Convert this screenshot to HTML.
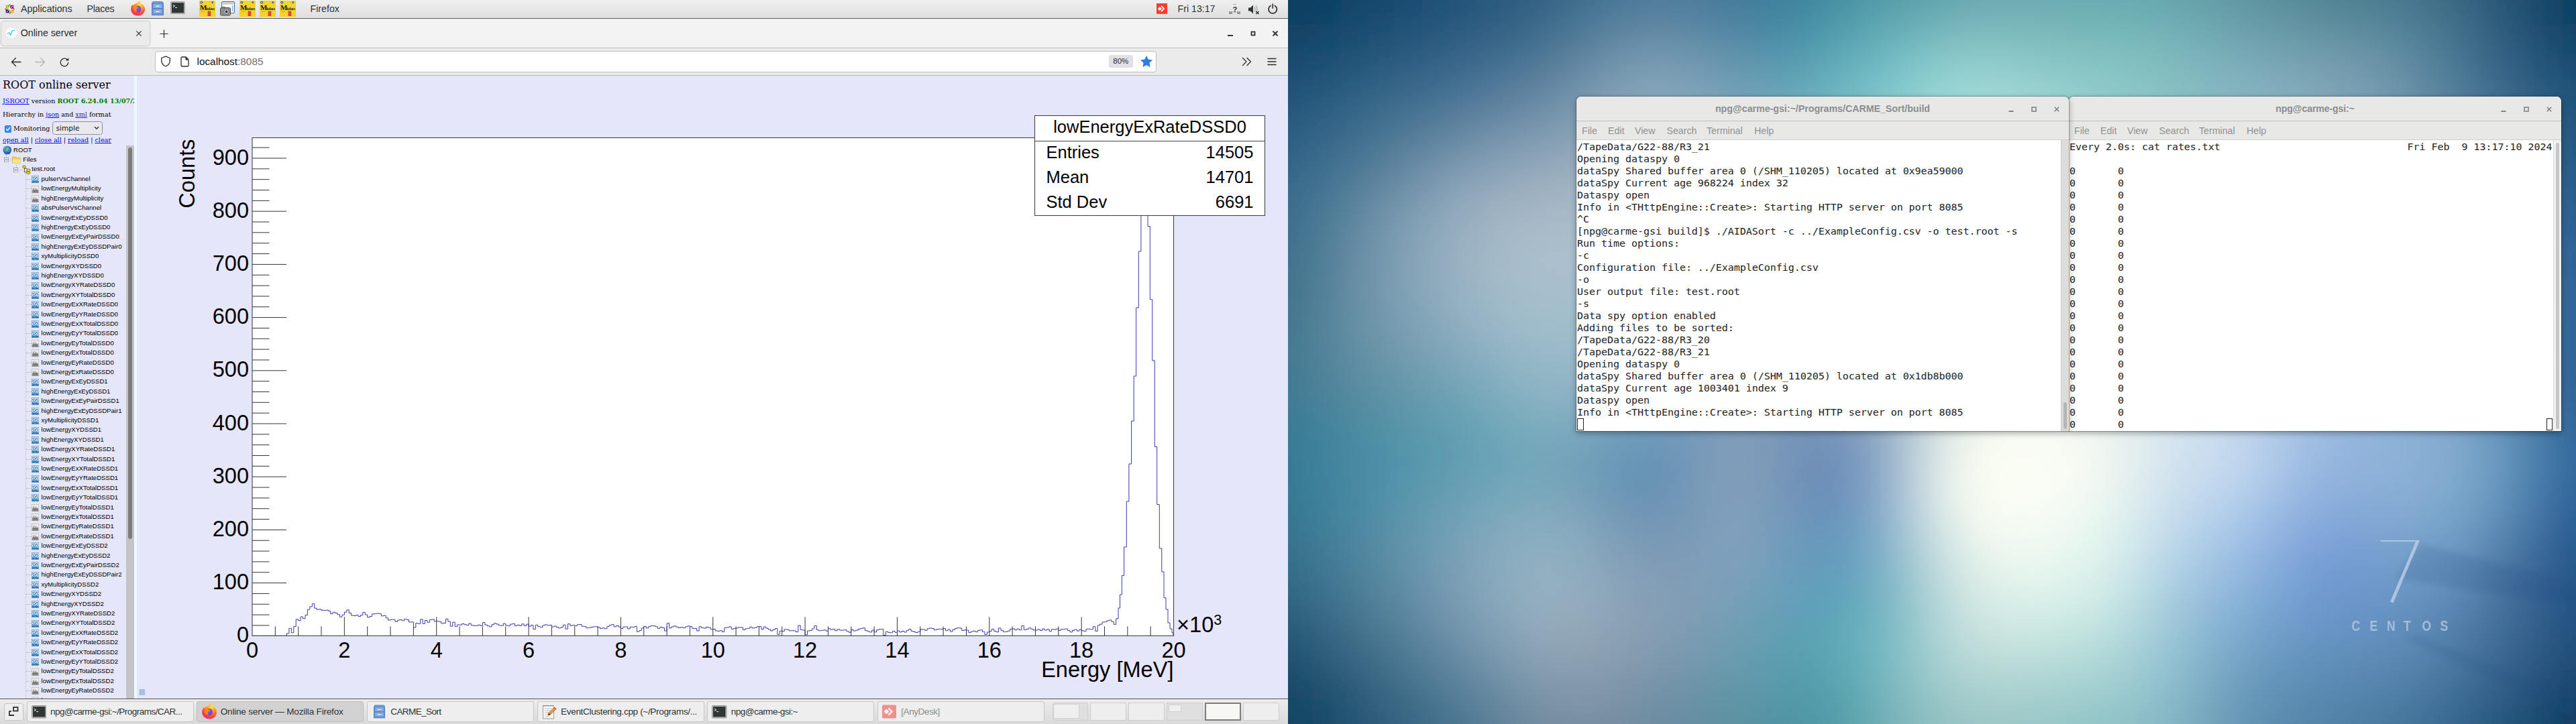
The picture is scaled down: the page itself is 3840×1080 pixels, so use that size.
<!DOCTYPE html><html><head><meta charset="utf-8"><title>screen</title><style>

*{box-sizing:border-box}
html,body{margin:0;padding:0}
body{width:3840px;height:1080px;position:relative;overflow:hidden;background:#0b3f5f;font-family:"Liberation Sans",sans-serif}
.abs{position:absolute}
#left{position:absolute;left:0;top:0;width:1920px;height:1080px;overflow:hidden;background:#e6e6fa}
#right{position:absolute;left:1920px;top:0;width:1920px;height:1080px;overflow:hidden}
/* top panel */
#tpanel{position:absolute;left:0;top:0;width:1920px;height:28px;background:linear-gradient(#efefef,#dfdfdf);border-bottom:1px solid #5a5a5a}
#tpanel .t{position:absolute;top:0;line-height:27px;font-size:14.2px;color:#2e3436;white-space:nowrap}
/* firefox chrome */
#tabbar{position:absolute;left:0;top:28px;width:1920px;height:44px;background:#f3f3f3;border-bottom:1px solid #bdbdbd}
#tab{position:absolute;left:1.3px;top:3.3px;width:222.5px;height:37.4px;background:#ebebeb;border:1px solid #cfcfcf;border-radius:5px;box-shadow:0 0 2px rgba(0,0,0,.15)}
#navbar{position:absolute;left:0;top:72px;width:1920px;height:41px;background:#ebebeb;border-bottom:1px solid #b9b9b9}
#urlbar{position:absolute;left:231px;top:3.8px;width:1493px;height:31.8px;background:#fff;border:1px solid #bebebe;border-radius:4px}
.ui{font-family:"Liberation Sans",sans-serif;color:#2e3436}
/* page */
#side{position:absolute;left:0;top:113px;width:200px;height:930px;background:#e6e6fa;overflow:hidden;font-family:"DejaVu Serif","Liberation Serif",serif;color:#000}
#split{position:absolute;left:200px;top:113px;width:4px;height:930px;background:#e8fbff}
#main{position:absolute;left:204px;top:113px;width:1716px;height:930px;background:#e6e6fa}
#side a{color:#0000ee;text-decoration:underline}
#side .ln{position:absolute;left:4px;white-space:nowrap}
.trow{position:absolute;left:0;height:14.4px;line-height:14.4px;font-family:"Liberation Sans",sans-serif;font-size:9.6px;color:#000;white-space:nowrap}
/* bottom panel */
#bpanel{position:absolute;left:0;top:1042px;width:1920px;height:38px;background:linear-gradient(#ececec,#dadada);border-top:1.5px solid #555}
.tb{position:absolute;top:3px;height:30.5px;border:1px solid #c6c6c6;border-radius:3px;background:#eeeeee;font-size:14.2px;color:#2e3436;white-space:nowrap;overflow:hidden}
.tb .lbl{position:absolute;left:34.5px;top:0;line-height:29px}
.tb.act{background:#d2d2d2;border-color:#bdbdbd}
.ws{position:absolute;top:5px;height:26.5px;border:1px solid #cdcdcd;background:#eeeeee}
/* terminals */
.win{position:absolute;top:144px;height:499px;border-radius:7px 7px 0 0;background:#fff;box-shadow:0 0 0 1px rgba(0,0,0,.25),0 3px 10px rgba(0,0,0,.35);overflow:hidden}
.win .title{position:absolute;left:0;top:0;right:0;height:37px;background:#e8e8e7;border-bottom:1px solid #c3c3c1;text-align:center;line-height:36px;font-weight:bold;font-size:14.2px;color:#8b8e8f}
.win .menu{position:absolute;left:0;top:37px;right:0;height:28px;background:#e8e8e7;border-bottom:1px solid #d0d0ce;font-size:14.2px;color:#8f9293}
.win .menu span{position:absolute;top:.7px;line-height:27px}
.term{position:absolute;top:66px;left:1px;font-family:"DejaVu Sans Mono","Liberation Mono",monospace;font-size:14.95px;line-height:18px;color:#222;white-space:pre;margin:0}

</style></head><body>
<div id="left">
<div id="tpanel">
<svg class="abs" style="left:7px;top:6px" width="15" height="15" viewBox="0 0 16 16">
<g transform="rotate(0 8 8)">
<rect x="1.800" y="1.800" width="5.600" height="5.600" fill="#9ccd2a"/><rect x="8.600" y="1.800" width="5.600" height="5.600" fill="#932279"/>
<rect x="1.800" y="8.600" width="5.600" height="5.600" fill="#262577"/><rect x="8.600" y="8.600" width="5.600" height="5.600" fill="#efa724"/>
<path d="M8 0l2.200 2.800H5.800zM8 16l2.200-2.800H5.800zM0 8l2.800-2.200v4.400zM16 8l-2.800-2.200v4.400z" fill="#932279"/>
<path d="M8 0l2.200 2.800H8zM0 8l2.800-2.200V8z" fill="#efa724"/>
<path d="M8 16l-2.200-2.800H8zM16 8l-2.800 2.200V8z" fill="#9ccd2a"/>
<path d="M3 3l10 10M13 3L3 13" stroke="#fff" stroke-width=".9"/><path d="M8 2v12M2 8h12" stroke="#fff" stroke-width=".7"/>
</g></svg>
<div class="t" style="left:31px">Applications</div>
<div class="t" style="left:129.500px;letter-spacing:-.28px">Places</div>
<svg class="abs" style="left:193.5px;top:1px" width="23" height="23" viewBox="0 0 24 24">
<defs><radialGradient id="ffg193" cx="65%" cy="20%" r="90%"><stop offset="0" stop-color="#ffe94a"/><stop offset=".35" stop-color="#ff9a1f"/><stop offset=".7" stop-color="#ff4a3d"/><stop offset="1" stop-color="#e8217a"/></radialGradient>
<radialGradient id="ffp193" cx="50%" cy="40%" r="60%"><stop offset="0" stop-color="#9a5cf0"/><stop offset="1" stop-color="#5b3fd0"/></radialGradient></defs>
<path d="M12 2.6c1.2-1.4 2.7-2 3.2-2.1 0 1.8 1 3 2.6 4.2C21 7 23 9.6 23 13.2 23 19 18.3 23.4 12.2 23.4 6 23.4 1.2 19 1.2 13.2c0-3 1.2-5.600 3-7.400 0 .8.200 1.500.600 2 .8-1.600 2.400-2.900 4.200-3.400C10 4 11 3.600 12 2.600z" fill="url(#ffg193)"/>
<circle cx="11.6" cy="13" r="5.3" fill="url(#ffp193)"/>
<path d="M5.500 9.500c2-2.600 5.500-2.600 7.500-1.200-1.600 0-2.600.800-2.800 1.800 2 .2 3 .6 3.200 1.600-1.600-.4-3 .4-3.600 1.600-.8 1.600.2 3.400 2.200 3.800-3 .8-6-.8-6.900-3.600-.4-1.400-.2-2.800.4-4z" fill="#ff8a16"/>
</svg>
<svg class="abs" style="left:226px;top:2px" width="18" height="21" viewBox="0 0 18 21">
<path d="M2 0.500h14l1.500 2v18h-17v-18z" fill="#6f9fe0" stroke="#3f6fb8" stroke-width=".8"/>
<rect x="2" y="3.500" width="14" height="7" fill="#88b2ec" stroke="#3f6fb8" stroke-width=".6"/>
<rect x="2" y="11.500" width="14" height="7" fill="#88b2ec" stroke="#3f6fb8" stroke-width=".6"/>
<rect x="6" y="6" width="6" height="2.400" rx=".6" fill="#f4f4f4" stroke="#777" stroke-width=".5"/>
<rect x="6" y="14" width="6" height="2.400" rx=".6" fill="#f4f4f4" stroke="#777" stroke-width=".5"/>
</svg>
<svg class="abs" style="left:254px;top:2.2px" width="22" height="19.3" viewBox="0 0 22 19">
<rect x=".5" y=".5" width="21" height="18" rx="1.2" fill="#b9bbb8" stroke="#9a9c99"/>
<rect x="2" y="2" width="18" height="15" fill="#2f3534"/>
<path d="M4 5l2.300 1.700L4 8.400" stroke="#e8e8e8" stroke-width="1.100" fill="none"/><path d="M7 9.300h3" stroke="#e8e8e8" stroke-width="1.100"/>
</svg>
<svg class="abs" style="left:297px;top:1px" width="24" height="24" viewBox="0 0 24 24">
<rect width="24" height="24" fill="#f6d32a"/>
<circle cx="3.300" cy="2.600" r="1.900" fill="#2a4a9a"/><circle cx="3.300" cy="2.600" r=".9" fill="#e8e8f0"/>
<circle cx="19.800" cy="2.600" r="1.500" fill="#4a62a8"/>
<text x="1" y="13.500" font-family="Liberation Serif,serif" font-weight="bold" font-size="11" fill="#111">M</text>
<text x="10.500" y="13.500" font-family="Liberation Serif,serif" font-weight="bold" font-size="6.500" fill="#111" textLength="12.500" lengthAdjust="spacingAndGlyphs">idas</text>
<rect x="12.500" y="15.500" width="4.800" height="7.500" fill="#e0452a"/><rect x="14.200" y="16.500" width="1.200" height="5" fill="#7a6ab0"/>
<rect x="2.500" y="16.200" width="6" height=".8" fill="#b89a20"/>
</svg>
<svg class="abs" style="left:328px;top:2px" width="23" height="22" viewBox="0 0 23 22">
<rect x="2.500" y=".500" width="19" height="17" rx="1.500" fill="#fdfdfd" stroke="#3a67b0"/>
<rect x="3.500" y="1.500" width="17" height="3" fill="#c9c9c9"/>
<rect x="17.800" y="6" width="1.800" height="9" fill="#9ab8e8"/>
<rect x=".5" y="9.500" width="15" height="11.500" rx="1.800" fill="#8d8f8c" stroke="#4c4e4b"/>
<rect x="3" y="8" width="5" height="2.500" rx=".8" fill="#6c6e6b"/>
<circle cx="9.500" cy="15.500" r="3.800" fill="#d8d8e0" stroke="#55575a" stroke-width=".8"/><circle cx="9.500" cy="15.500" r="2" fill="#20305a"/>
<rect x="12.800" y="18.300" width="1.800" height="1.500" fill="#f0b030"/>
</svg>
<svg class="abs" style="left:357px;top:1px" width="24" height="24" viewBox="0 0 24 24">
<rect width="24" height="24" fill="#f6d32a"/>
<circle cx="3.300" cy="2.600" r="1.900" fill="#2a4a9a"/><circle cx="3.300" cy="2.600" r=".9" fill="#e8e8f0"/>
<circle cx="19.800" cy="2.600" r="1.500" fill="#4a62a8"/>
<text x="1" y="13.500" font-family="Liberation Serif,serif" font-weight="bold" font-size="11" fill="#111">M</text>
<text x="10.500" y="13.500" font-family="Liberation Serif,serif" font-weight="bold" font-size="6.500" fill="#111" textLength="12.500" lengthAdjust="spacingAndGlyphs">idas</text>
<rect x="12.500" y="15.500" width="4.800" height="7.500" fill="#e0452a"/><rect x="14.200" y="16.500" width="1.200" height="5" fill="#7a6ab0"/>
<rect x="2.500" y="16.200" width="6" height=".8" fill="#b89a20"/>
</svg>
<svg class="abs" style="left:387px;top:1px" width="24" height="24" viewBox="0 0 24 24">
<rect width="24" height="24" fill="#f6d32a"/>
<circle cx="3.300" cy="2.600" r="1.900" fill="#2a4a9a"/><circle cx="3.300" cy="2.600" r=".9" fill="#e8e8f0"/>
<circle cx="19.800" cy="2.600" r="1.500" fill="#4a62a8"/>
<text x="1" y="13.500" font-family="Liberation Serif,serif" font-weight="bold" font-size="11" fill="#111">M</text>
<text x="10.500" y="13.500" font-family="Liberation Serif,serif" font-weight="bold" font-size="6.500" fill="#111" textLength="12.500" lengthAdjust="spacingAndGlyphs">idas</text>
<rect x="12.500" y="15.500" width="4.800" height="7.500" fill="#e0452a"/><rect x="14.200" y="16.500" width="1.200" height="5" fill="#7a6ab0"/>
<rect x="2.500" y="16.200" width="6" height=".8" fill="#b89a20"/>
</svg>
<svg class="abs" style="left:417px;top:1px" width="24" height="24" viewBox="0 0 24 24">
<rect width="24" height="24" fill="#f6d32a"/>
<circle cx="3.300" cy="2.600" r="1.900" fill="#2a4a9a"/><circle cx="3.300" cy="2.600" r=".9" fill="#e8e8f0"/>
<circle cx="19.800" cy="2.600" r="1.500" fill="#4a62a8"/>
<text x="1" y="13.500" font-family="Liberation Serif,serif" font-weight="bold" font-size="11" fill="#111">M</text>
<text x="10.500" y="13.500" font-family="Liberation Serif,serif" font-weight="bold" font-size="6.500" fill="#111" textLength="12.500" lengthAdjust="spacingAndGlyphs">idas</text>
<rect x="12.500" y="15.500" width="4.800" height="7.500" fill="#e0452a"/><rect x="14.200" y="16.500" width="1.200" height="5" fill="#7a6ab0"/>
<rect x="2.500" y="16.200" width="6" height=".8" fill="#b89a20"/>
</svg>
<div class="t" style="left:462.500px">Firefox</div>
<svg class="abs" style="left:1724px;top:5px" width="16" height="15.800" viewBox="0 0 17 16" preserveAspectRatio="none"><rect width="17" height="16" fill="#fb3b30"/><path d="M8.200 3.200L13 8l-4.800 4.800L6.900 11.500 10.400 8 6.900 4.500z" fill="#fff"/><path d="M5.200 4.800L8.400 8l-3.200 3.200L2 8z" fill="#fff"/></svg>
<div class="t" style="left:1755.500px">Fri 13:17</div>
<svg class="abs" style="left:1832px;top:6px" width="17" height="16" viewBox="0 0 17 16"><rect x="0" y="11" width="5" height="4" fill="#999"/><rect x="12" y="11" width="5" height="4" fill="#999"/><rect x="6" y="11.500" width="5" height="1" fill="#aaa"/><rect x="6" y="0" width="5" height="1" fill="#aaa"/><text x="5.500" y="12" font-family="Liberation Sans,sans-serif" font-weight="bold" font-size="11" fill="#2e3436">?</text></svg>
<svg class="abs" style="left:1860px;top:6px" width="18" height="16" viewBox="0 0 18 16"><path d="M1 5.500h3l4-4v13l-4-4H1z" fill="#2e3436"/><path d="M10 4.500c1.500 1.500 1.500 5.500 0 7M12 2.500c2.600 2.800 2.600 8.200 0 11" stroke="#a5a7a8" stroke-width="1.300" fill="none"/><path d="M12.500 11l4 4M16.500 11l-4 4" stroke="#2e3436" stroke-width="1.500"/></svg>
<svg class="abs" style="left:1889px;top:4.800px" width="16.500" height="16.500" viewBox="0 0 16 16"><path d="M5 3.300a6 6 0 1 0 6 0" stroke="#2e3436" stroke-width="1.700" fill="none" stroke-linecap="round"/><path d="M8 1v6" stroke="#2e3436" stroke-width="1.600" stroke-linecap="round"/></svg>
</div>
<div id="tabbar"><div id="tab">
<svg class="abs" style="left:7px;top:9px" width="16" height="16" viewBox="0 0 16 16"><circle cx="8" cy="8" r="8" fill="#fff"/><path d="M2 9.500l3-2 1.800 4L9.500 4.500H13" stroke="#35c3e6" stroke-width="1.100" fill="none"/></svg>
<div class="abs ui" style="left:28.500px;top:0;line-height:35px;font-size:14.200px;color:#2a2a2e">Online server</div>
<svg class="abs" style="left:200px;top:13px" width="10" height="10" viewBox="0 0 10 10"><path d="M1.400 1.400l7.200 7.200M8.600 1.400L1.400 8.600" stroke="#2a2a2e" stroke-width="1.100"/></svg>
</div>
<svg class="abs" style="left:238px;top:16px" width="13" height="13" viewBox="0 0 13 13"><path d="M6.500 0.500v12M.5 6.500h12" stroke="#2a2a2e" stroke-width="1.200"/></svg>
<svg class="abs" style="left:1829px;top:17px" width="10" height="10" viewBox="0 0 10 10"><path d="M1 8h8" stroke="#2e3436" stroke-width="2"/></svg>
<svg class="abs" style="left:1863px;top:17px" width="10" height="10" viewBox="0 0 10 10"><rect x="2.500" y="2.500" width="5" height="5" stroke="#2e3436" stroke-width="1.800" fill="none"/></svg>
<svg class="abs" style="left:1896px;top:17px" width="10" height="10" viewBox="0 0 10 10"><path d="M1.500 1.500l7 7M8.500 1.500l-7 7" stroke="#2e3436" stroke-width="1.800"/></svg>
</div>
<div id="navbar">
<svg class="abs" style="left:16px;top:13px" width="16" height="15" viewBox="0 0 16 15"><path d="M7.500 1.500L1.500 7.500l6 6M1.500 7.500H15" stroke="#2a2a2e" stroke-width="1.300" fill="none" stroke-linecap="round" stroke-linejoin="round"/></svg>
<svg class="abs" style="left:52px;top:13px" width="16" height="15" viewBox="0 0 16 15"><path d="M8.500 1.500l6 6-6 6M14.500 7.500H1" stroke="#b5b5b8" stroke-width="1.300" fill="none" stroke-linecap="round" stroke-linejoin="round"/></svg>
<svg class="abs" style="left:88px;top:12.500px" width="16" height="16" viewBox="0 0 16 16"><path d="M13.800 8.300a5.800 5.800 0 1 1-2-4.700" stroke="#2a2a2e" stroke-width="1.300" fill="none" stroke-linecap="round"/><path d="M14.300 1.200v4.300H10z" fill="#2a2a2e"/></svg>
<div id="urlbar">
<svg class="abs" style="left:7px;top:6px" width="16" height="17" viewBox="0 0 16 17"><path d="M8 1.200l6.300 2.300v4c0 4-2.600 6.800-6.300 8.500C4.300 14.300 1.700 11.500 1.700 7.500v-4z" stroke="#2a2a2e" stroke-width="1.300" fill="none" stroke-linejoin="round"/></svg>
<svg class="abs" style="left:37px;top:7px" width="13" height="16" viewBox="0 0 13 16"><path d="M2.500 1h5.500l4 4v8.500a1.500 1.500 0 0 1-1.500 1.500h-8A1.500 1.500 0 0 1 1 13.500v-11A1.500 1.500 0 0 1 2.500 1z" stroke="#2a2a2e" stroke-width="1.300" fill="none"/><path d="M7.500 1v4.500H12z" fill="#2a2a2e"/></svg>
<div class="abs ui" style="left:61.500px;top:0;line-height:29px;font-size:15.350px;color:#15141a;white-space:nowrap">localhost<span style="color:#6f6f78">:8085</span></div>
<div class="abs ui" style="left:1420.500px;top:5.500px;width:36.500px;height:19px;border-radius:3px;background:#e0e0e6;text-align:center;line-height:19px;font-size:11.500px;color:#2a2a2e">80%</div>
<svg class="abs" style="left:1468px;top:6px" width="18" height="17" viewBox="0 0 18 17"><path d="M9 .8l2.500 5.300 5.800.7-4.300 4 1.100 5.700L9 13.700l-5.100 2.800L5 10.800.7 6.800l5.800-.7z" fill="#2f7de1" stroke="#2f7de1" stroke-width=".8" stroke-linejoin="round"/></svg>
</div>
<svg class="abs" style="left:1851px;top:13px" width="15" height="14" viewBox="0 0 15 14"><path d="M1.500 1.500L7 7l-5.500 5.500M8 1.500L13.500 7 8 12.500" stroke="#2a2a2e" stroke-width="1.300" fill="none" stroke-linecap="round" stroke-linejoin="round"/></svg>
<svg class="abs" style="left:1888.500px;top:14px" width="14" height="12" viewBox="0 0 14 12"><path d="M.5 1.500h13M.5 6h13M.5 10.500h13" stroke="#2a2a2e" stroke-width="1.300"/></svg>
</div>
<div id="side">
<div class="ln" style="top:3.800px;font-size:16px;line-height:20px">ROOT online server</div>
<div class="ln" style="top:30.500px;font-size:9.600px;line-height:14px"><a>JSROOT</a> version <b style="color:#008000">ROOT 6.24.04 13/07/2021</b></div>
<div class="ln" style="top:51px;font-size:9.600px;line-height:14px">Hierarchy in <a>json</a> and <a style="color:#551a8b">xml</a> format</div>
<div class="abs" style="left:6.800px;top:74.300px;width:10.400px;height:10.400px;border-radius:2px;background:#3a8fe8;border:.5px solid #2a78d0"></div>
<svg class="abs" style="left:6.800px;top:74.300px" width="10.400" height="10.400" viewBox="0 0 10 10"><path d="M2.200 5.200l2 2 3.600-4.400" stroke="#fff" stroke-width="1.400" fill="none"/></svg>
<div class="ln" style="left:20px;top:72px;font-size:9.600px;line-height:14px">Monitoring</div>
<div class="abs" style="left:78px;top:67.500px;width:75px;height:20.300px;border:1px solid #8f8f9d;border-radius:3.500px;background:#e9e9ed"></div>
<div class="abs" style="left:83.500px;top:69px;font-family:'DejaVu Sans','Liberation Sans',sans-serif;font-size:10.600px;line-height:18px;color:#111">simple</div>
<svg class="abs" style="left:140px;top:75px" width="8" height="6" viewBox="0 0 8 6"><path d="M1 1.200l3 3 3-3" stroke="#222" stroke-width="1.300" fill="none"/></svg>
<div class="ln" style="top:89.200px;font-size:9.600px;line-height:14px"><a>open all</a> | <a>close all</a> | <a>reload</a> | <a>clear</a></div>
<div class="abs" style="left:9px;top:118.2px;width:0;height:4px;border-left:1px dotted #b4b4bc"></div>
<div class="abs" style="left:23.500px;top:132.6px;width:0;height:4px;border-left:1px dotted #b4b4bc"></div>
<div class="abs" style="left:38px;top:145.0px;width:0;height:900px;border-left:1px dotted #b4b4bc"></div>
<div class="trow" style="top:103.8px"><svg class="abs" style="left:4px;top:.5px" width="13.500" height="13.500" viewBox="0 0 16 16"><defs><radialGradient id="gl" cx="40%" cy="35%" r="70%"><stop offset="0" stop-color="#9fd0ff"/><stop offset=".6" stop-color="#2f6fd0"/><stop offset="1" stop-color="#123a8a"/></radialGradient></defs><circle cx="8" cy="8" r="7.500" fill="url(#gl)"/><path d="M3 6c1-2 3-3 5-3 1 1 0 2-1 3s-1 3-2 3-2-1-2-3zM10 7c1-1 3-1 4 0 0 2-1 4-3 5-1-1-1-3-1-5z" fill="#3fa64a"/><ellipse cx="8" cy="15" rx="5" ry="1" fill="#2a5fb0" opacity=".5"/></svg><span class="abs" style="left:20px">ROOT</span></div>
<div class="trow" style="top:118.2px"><svg class="abs" style="left:5.5px;top:4px" width="7.200" height="7.200" viewBox="0 0 9 9"><rect x=".5" y=".5" width="8" height="8" fill="#f4f4f8" stroke="#8a8a8a"/><path d="M2 4.500h5" stroke="#333" stroke-width="1"/></svg><div class="abs" style="left:13px;top:7px;width:5px;border-top:1px dotted #b4b4bc"></div><svg class="abs" style="left:18px;top:1.500px" width="13.500" height="11.500" viewBox="0 0 16 13"><path d="M.5 2.500c0-1 .5-1.500 1.500-1.500h3.500l1.500 1.500h6c1 0 1.500.5 1.500 1.500v7c0 1-.5 1.500-1.500 1.500H2c-1 0-1.500-.5-1.500-1.500z" fill="#f6d25a" stroke="#c89a1c" stroke-width=".8"/><path d="M1 5.500h14v5.500c0 .8-.4 1.200-1.200 1.200H2.200C1.400 12.200 1 11.800 1 11z" fill="#fbe48a"/></svg><span class="abs" style="left:34.300px">Files</span></div>
<div class="trow" style="top:132.6px"><svg class="abs" style="left:20.3px;top:4px" width="7.200" height="7.200" viewBox="0 0 9 9"><rect x=".5" y=".5" width="8" height="8" fill="#f4f4f8" stroke="#8a8a8a"/><path d="M2 4.500h5" stroke="#333" stroke-width="1"/></svg><div class="abs" style="left:28px;top:7px;width:5px;border-top:1px dotted #b4b4bc"></div><svg class="abs" style="left:33px;top:0px" width="13.500" height="14" viewBox="0 0 16 16"><path d="M4 3v10M4 6h5M4 12h6" stroke="#444" stroke-width="1"/><rect x="1" y="1" width="5" height="4" rx="1" fill="#f0d020" stroke="#6a5a00" stroke-width=".8"/><rect x="8" y="7" width="6" height="4" rx="1" fill="#f0d020" stroke="#6a5a00" stroke-width=".8"/><rect x="8" y="11.500" width="6" height="4" rx="1" fill="#f0d020" stroke="#6a5a00" stroke-width=".8"/></svg><span class="abs" style="left:47.300px;top:-1px">test.root</span></div>
<div class="trow" style="top:147.0px"><div class="abs" style="left:39px;top:7px;width:8px;border-top:1px dotted #b4b4bc"></div><svg class="abs" style="left:47.300px;top:2.200px" width="11.200" height="11.200" viewBox="0 0 16 16"><rect width="16" height="16" fill="#dfe9f5"/><rect x=".5" y=".5" width="15" height="15" fill="none" stroke="#6f93c0"/><path d="M2 3h3v2H2zM6 2h2v2H6zM10 3h3v2h-3zM3 6h2v2H3zM7 5h3v2H7zM12 6h2v2h-2zM2 9h2v2H2zM5 8h3v2H5zM9 9h2v2H9zM12 9h2v1h-2z" fill="#2d7fc1"/><rect x="1" y="11" width="14" height="4" fill="#1e6fb0"/><path d="M2 12h2v1H2zM6 13h3v1H6zM11 12h2v1h-2z" fill="#7fb6e6"/></svg><span class="abs" style="left:61.500px">pulserVsChannel</span></div>
<div class="trow" style="top:161.4px"><div class="abs" style="left:39px;top:7px;width:8px;border-top:1px dotted #b4b4bc"></div><svg class="abs" style="left:47.300px;top:2.200px" width="11.200" height="11.200" viewBox="0 0 16 16"><rect width="16" height="16" fill="#ececec"/><rect x=".5" y=".5" width="15" height="15" fill="none" stroke="#b5b5b5"/><path d="M2 15V9h1V6h1v4h1V4h1v5h1V7h1v3h1V5h1v4h1V7h1v3h1V8h1v7z" fill="#6c6c6c"/><rect x="1" y="12" width="14" height="3" fill="#8a8a8a"/></svg><span class="abs" style="left:61.500px">lowEnergyMultiplicity</span></div>
<div class="trow" style="top:175.8px"><div class="abs" style="left:39px;top:7px;width:8px;border-top:1px dotted #b4b4bc"></div><svg class="abs" style="left:47.300px;top:2.200px" width="11.200" height="11.200" viewBox="0 0 16 16"><rect width="16" height="16" fill="#ececec"/><rect x=".5" y=".5" width="15" height="15" fill="none" stroke="#b5b5b5"/><path d="M2 15V9h1V6h1v4h1V4h1v5h1V7h1v3h1V5h1v4h1V7h1v3h1V8h1v7z" fill="#6c6c6c"/><rect x="1" y="12" width="14" height="3" fill="#8a8a8a"/></svg><span class="abs" style="left:61.500px">highEnergyMultiplicity</span></div>
<div class="trow" style="top:190.2px"><div class="abs" style="left:39px;top:7px;width:8px;border-top:1px dotted #b4b4bc"></div><svg class="abs" style="left:47.300px;top:2.200px" width="11.200" height="11.200" viewBox="0 0 16 16"><rect width="16" height="16" fill="#dfe9f5"/><rect x=".5" y=".5" width="15" height="15" fill="none" stroke="#6f93c0"/><path d="M2 3h3v2H2zM6 2h2v2H6zM10 3h3v2h-3zM3 6h2v2H3zM7 5h3v2H7zM12 6h2v2h-2zM2 9h2v2H2zM5 8h3v2H5zM9 9h2v2H9zM12 9h2v1h-2z" fill="#2d7fc1"/><rect x="1" y="11" width="14" height="4" fill="#1e6fb0"/><path d="M2 12h2v1H2zM6 13h3v1H6zM11 12h2v1h-2z" fill="#7fb6e6"/></svg><span class="abs" style="left:61.500px">absPulserVsChannel</span></div>
<div class="trow" style="top:204.6px"><div class="abs" style="left:39px;top:7px;width:8px;border-top:1px dotted #b4b4bc"></div><svg class="abs" style="left:47.300px;top:2.200px" width="11.200" height="11.200" viewBox="0 0 16 16"><rect width="16" height="16" fill="#dfe9f5"/><rect x=".5" y=".5" width="15" height="15" fill="none" stroke="#6f93c0"/><path d="M2 3h3v2H2zM6 2h2v2H6zM10 3h3v2h-3zM3 6h2v2H3zM7 5h3v2H7zM12 6h2v2h-2zM2 9h2v2H2zM5 8h3v2H5zM9 9h2v2H9zM12 9h2v1h-2z" fill="#2d7fc1"/><rect x="1" y="11" width="14" height="4" fill="#1e6fb0"/><path d="M2 12h2v1H2zM6 13h3v1H6zM11 12h2v1h-2z" fill="#7fb6e6"/></svg><span class="abs" style="left:61.500px">lowEnergyExEyDSSD0</span></div>
<div class="trow" style="top:219.0px"><div class="abs" style="left:39px;top:7px;width:8px;border-top:1px dotted #b4b4bc"></div><svg class="abs" style="left:47.300px;top:2.200px" width="11.200" height="11.200" viewBox="0 0 16 16"><rect width="16" height="16" fill="#dfe9f5"/><rect x=".5" y=".5" width="15" height="15" fill="none" stroke="#6f93c0"/><path d="M2 3h3v2H2zM6 2h2v2H6zM10 3h3v2h-3zM3 6h2v2H3zM7 5h3v2H7zM12 6h2v2h-2zM2 9h2v2H2zM5 8h3v2H5zM9 9h2v2H9zM12 9h2v1h-2z" fill="#2d7fc1"/><rect x="1" y="11" width="14" height="4" fill="#1e6fb0"/><path d="M2 12h2v1H2zM6 13h3v1H6zM11 12h2v1h-2z" fill="#7fb6e6"/></svg><span class="abs" style="left:61.500px">highEnergyExEyDSSD0</span></div>
<div class="trow" style="top:233.4px"><div class="abs" style="left:39px;top:7px;width:8px;border-top:1px dotted #b4b4bc"></div><svg class="abs" style="left:47.300px;top:2.200px" width="11.200" height="11.200" viewBox="0 0 16 16"><rect width="16" height="16" fill="#dfe9f5"/><rect x=".5" y=".5" width="15" height="15" fill="none" stroke="#6f93c0"/><path d="M2 3h3v2H2zM6 2h2v2H6zM10 3h3v2h-3zM3 6h2v2H3zM7 5h3v2H7zM12 6h2v2h-2zM2 9h2v2H2zM5 8h3v2H5zM9 9h2v2H9zM12 9h2v1h-2z" fill="#2d7fc1"/><rect x="1" y="11" width="14" height="4" fill="#1e6fb0"/><path d="M2 12h2v1H2zM6 13h3v1H6zM11 12h2v1h-2z" fill="#7fb6e6"/></svg><span class="abs" style="left:61.500px">lowEnergyExEyPairDSSD0</span></div>
<div class="trow" style="top:247.8px"><div class="abs" style="left:39px;top:7px;width:8px;border-top:1px dotted #b4b4bc"></div><svg class="abs" style="left:47.300px;top:2.200px" width="11.200" height="11.200" viewBox="0 0 16 16"><rect width="16" height="16" fill="#dfe9f5"/><rect x=".5" y=".5" width="15" height="15" fill="none" stroke="#6f93c0"/><path d="M2 3h3v2H2zM6 2h2v2H6zM10 3h3v2h-3zM3 6h2v2H3zM7 5h3v2H7zM12 6h2v2h-2zM2 9h2v2H2zM5 8h3v2H5zM9 9h2v2H9zM12 9h2v1h-2z" fill="#2d7fc1"/><rect x="1" y="11" width="14" height="4" fill="#1e6fb0"/><path d="M2 12h2v1H2zM6 13h3v1H6zM11 12h2v1h-2z" fill="#7fb6e6"/></svg><span class="abs" style="left:61.500px">highEnergyExEyDSSDPair0</span></div>
<div class="trow" style="top:262.2px"><div class="abs" style="left:39px;top:7px;width:8px;border-top:1px dotted #b4b4bc"></div><svg class="abs" style="left:47.300px;top:2.200px" width="11.200" height="11.200" viewBox="0 0 16 16"><rect width="16" height="16" fill="#dfe9f5"/><rect x=".5" y=".5" width="15" height="15" fill="none" stroke="#6f93c0"/><path d="M2 3h3v2H2zM6 2h2v2H6zM10 3h3v2h-3zM3 6h2v2H3zM7 5h3v2H7zM12 6h2v2h-2zM2 9h2v2H2zM5 8h3v2H5zM9 9h2v2H9zM12 9h2v1h-2z" fill="#2d7fc1"/><rect x="1" y="11" width="14" height="4" fill="#1e6fb0"/><path d="M2 12h2v1H2zM6 13h3v1H6zM11 12h2v1h-2z" fill="#7fb6e6"/></svg><span class="abs" style="left:61.500px">xyMultiplicityDSSD0</span></div>
<div class="trow" style="top:276.6px"><div class="abs" style="left:39px;top:7px;width:8px;border-top:1px dotted #b4b4bc"></div><svg class="abs" style="left:47.300px;top:2.200px" width="11.200" height="11.200" viewBox="0 0 16 16"><rect width="16" height="16" fill="#dfe9f5"/><rect x=".5" y=".5" width="15" height="15" fill="none" stroke="#6f93c0"/><path d="M2 3h3v2H2zM6 2h2v2H6zM10 3h3v2h-3zM3 6h2v2H3zM7 5h3v2H7zM12 6h2v2h-2zM2 9h2v2H2zM5 8h3v2H5zM9 9h2v2H9zM12 9h2v1h-2z" fill="#2d7fc1"/><rect x="1" y="11" width="14" height="4" fill="#1e6fb0"/><path d="M2 12h2v1H2zM6 13h3v1H6zM11 12h2v1h-2z" fill="#7fb6e6"/></svg><span class="abs" style="left:61.500px">lowEnergyXYDSSD0</span></div>
<div class="trow" style="top:291.0px"><div class="abs" style="left:39px;top:7px;width:8px;border-top:1px dotted #b4b4bc"></div><svg class="abs" style="left:47.300px;top:2.200px" width="11.200" height="11.200" viewBox="0 0 16 16"><rect width="16" height="16" fill="#dfe9f5"/><rect x=".5" y=".5" width="15" height="15" fill="none" stroke="#6f93c0"/><path d="M2 3h3v2H2zM6 2h2v2H6zM10 3h3v2h-3zM3 6h2v2H3zM7 5h3v2H7zM12 6h2v2h-2zM2 9h2v2H2zM5 8h3v2H5zM9 9h2v2H9zM12 9h2v1h-2z" fill="#2d7fc1"/><rect x="1" y="11" width="14" height="4" fill="#1e6fb0"/><path d="M2 12h2v1H2zM6 13h3v1H6zM11 12h2v1h-2z" fill="#7fb6e6"/></svg><span class="abs" style="left:61.500px">highEnergyXYDSSD0</span></div>
<div class="trow" style="top:305.4px"><div class="abs" style="left:39px;top:7px;width:8px;border-top:1px dotted #b4b4bc"></div><svg class="abs" style="left:47.300px;top:2.200px" width="11.200" height="11.200" viewBox="0 0 16 16"><rect width="16" height="16" fill="#dfe9f5"/><rect x=".5" y=".5" width="15" height="15" fill="none" stroke="#6f93c0"/><path d="M2 3h3v2H2zM6 2h2v2H6zM10 3h3v2h-3zM3 6h2v2H3zM7 5h3v2H7zM12 6h2v2h-2zM2 9h2v2H2zM5 8h3v2H5zM9 9h2v2H9zM12 9h2v1h-2z" fill="#2d7fc1"/><rect x="1" y="11" width="14" height="4" fill="#1e6fb0"/><path d="M2 12h2v1H2zM6 13h3v1H6zM11 12h2v1h-2z" fill="#7fb6e6"/></svg><span class="abs" style="left:61.500px">lowEnergyXYRateDSSD0</span></div>
<div class="trow" style="top:319.8px"><div class="abs" style="left:39px;top:7px;width:8px;border-top:1px dotted #b4b4bc"></div><svg class="abs" style="left:47.300px;top:2.200px" width="11.200" height="11.200" viewBox="0 0 16 16"><rect width="16" height="16" fill="#dfe9f5"/><rect x=".5" y=".5" width="15" height="15" fill="none" stroke="#6f93c0"/><path d="M2 3h3v2H2zM6 2h2v2H6zM10 3h3v2h-3zM3 6h2v2H3zM7 5h3v2H7zM12 6h2v2h-2zM2 9h2v2H2zM5 8h3v2H5zM9 9h2v2H9zM12 9h2v1h-2z" fill="#2d7fc1"/><rect x="1" y="11" width="14" height="4" fill="#1e6fb0"/><path d="M2 12h2v1H2zM6 13h3v1H6zM11 12h2v1h-2z" fill="#7fb6e6"/></svg><span class="abs" style="left:61.500px">lowEnergyXYTotalDSSD0</span></div>
<div class="trow" style="top:334.2px"><div class="abs" style="left:39px;top:7px;width:8px;border-top:1px dotted #b4b4bc"></div><svg class="abs" style="left:47.300px;top:2.200px" width="11.200" height="11.200" viewBox="0 0 16 16"><rect width="16" height="16" fill="#dfe9f5"/><rect x=".5" y=".5" width="15" height="15" fill="none" stroke="#6f93c0"/><path d="M2 3h3v2H2zM6 2h2v2H6zM10 3h3v2h-3zM3 6h2v2H3zM7 5h3v2H7zM12 6h2v2h-2zM2 9h2v2H2zM5 8h3v2H5zM9 9h2v2H9zM12 9h2v1h-2z" fill="#2d7fc1"/><rect x="1" y="11" width="14" height="4" fill="#1e6fb0"/><path d="M2 12h2v1H2zM6 13h3v1H6zM11 12h2v1h-2z" fill="#7fb6e6"/></svg><span class="abs" style="left:61.500px">lowEnergyExXRateDSSD0</span></div>
<div class="trow" style="top:348.6px"><div class="abs" style="left:39px;top:7px;width:8px;border-top:1px dotted #b4b4bc"></div><svg class="abs" style="left:47.300px;top:2.200px" width="11.200" height="11.200" viewBox="0 0 16 16"><rect width="16" height="16" fill="#dfe9f5"/><rect x=".5" y=".5" width="15" height="15" fill="none" stroke="#6f93c0"/><path d="M2 3h3v2H2zM6 2h2v2H6zM10 3h3v2h-3zM3 6h2v2H3zM7 5h3v2H7zM12 6h2v2h-2zM2 9h2v2H2zM5 8h3v2H5zM9 9h2v2H9zM12 9h2v1h-2z" fill="#2d7fc1"/><rect x="1" y="11" width="14" height="4" fill="#1e6fb0"/><path d="M2 12h2v1H2zM6 13h3v1H6zM11 12h2v1h-2z" fill="#7fb6e6"/></svg><span class="abs" style="left:61.500px">lowEnergyEyYRateDSSD0</span></div>
<div class="trow" style="top:363.0px"><div class="abs" style="left:39px;top:7px;width:8px;border-top:1px dotted #b4b4bc"></div><svg class="abs" style="left:47.300px;top:2.200px" width="11.200" height="11.200" viewBox="0 0 16 16"><rect width="16" height="16" fill="#dfe9f5"/><rect x=".5" y=".5" width="15" height="15" fill="none" stroke="#6f93c0"/><path d="M2 3h3v2H2zM6 2h2v2H6zM10 3h3v2h-3zM3 6h2v2H3zM7 5h3v2H7zM12 6h2v2h-2zM2 9h2v2H2zM5 8h3v2H5zM9 9h2v2H9zM12 9h2v1h-2z" fill="#2d7fc1"/><rect x="1" y="11" width="14" height="4" fill="#1e6fb0"/><path d="M2 12h2v1H2zM6 13h3v1H6zM11 12h2v1h-2z" fill="#7fb6e6"/></svg><span class="abs" style="left:61.500px">lowEnergyExXTotalDSSD0</span></div>
<div class="trow" style="top:377.4px"><div class="abs" style="left:39px;top:7px;width:8px;border-top:1px dotted #b4b4bc"></div><svg class="abs" style="left:47.300px;top:2.200px" width="11.200" height="11.200" viewBox="0 0 16 16"><rect width="16" height="16" fill="#dfe9f5"/><rect x=".5" y=".5" width="15" height="15" fill="none" stroke="#6f93c0"/><path d="M2 3h3v2H2zM6 2h2v2H6zM10 3h3v2h-3zM3 6h2v2H3zM7 5h3v2H7zM12 6h2v2h-2zM2 9h2v2H2zM5 8h3v2H5zM9 9h2v2H9zM12 9h2v1h-2z" fill="#2d7fc1"/><rect x="1" y="11" width="14" height="4" fill="#1e6fb0"/><path d="M2 12h2v1H2zM6 13h3v1H6zM11 12h2v1h-2z" fill="#7fb6e6"/></svg><span class="abs" style="left:61.500px">lowEnergyEyYTotalDSSD0</span></div>
<div class="trow" style="top:391.8px"><div class="abs" style="left:39px;top:7px;width:8px;border-top:1px dotted #b4b4bc"></div><svg class="abs" style="left:47.300px;top:2.200px" width="11.200" height="11.200" viewBox="0 0 16 16"><rect width="16" height="16" fill="#ececec"/><rect x=".5" y=".5" width="15" height="15" fill="none" stroke="#b5b5b5"/><path d="M2 15V9h1V6h1v4h1V4h1v5h1V7h1v3h1V5h1v4h1V7h1v3h1V8h1v7z" fill="#6c6c6c"/><rect x="1" y="12" width="14" height="3" fill="#8a8a8a"/></svg><span class="abs" style="left:61.500px">lowEnergyEyTotalDSSD0</span></div>
<div class="trow" style="top:406.2px"><div class="abs" style="left:39px;top:7px;width:8px;border-top:1px dotted #b4b4bc"></div><svg class="abs" style="left:47.300px;top:2.200px" width="11.200" height="11.200" viewBox="0 0 16 16"><rect width="16" height="16" fill="#ececec"/><rect x=".5" y=".5" width="15" height="15" fill="none" stroke="#b5b5b5"/><path d="M2 15V9h1V6h1v4h1V4h1v5h1V7h1v3h1V5h1v4h1V7h1v3h1V8h1v7z" fill="#6c6c6c"/><rect x="1" y="12" width="14" height="3" fill="#8a8a8a"/></svg><span class="abs" style="left:61.500px">lowEnergyExTotalDSSD0</span></div>
<div class="trow" style="top:420.6px"><div class="abs" style="left:39px;top:7px;width:8px;border-top:1px dotted #b4b4bc"></div><svg class="abs" style="left:47.300px;top:2.200px" width="11.200" height="11.200" viewBox="0 0 16 16"><rect width="16" height="16" fill="#ececec"/><rect x=".5" y=".5" width="15" height="15" fill="none" stroke="#b5b5b5"/><path d="M2 15V9h1V6h1v4h1V4h1v5h1V7h1v3h1V5h1v4h1V7h1v3h1V8h1v7z" fill="#6c6c6c"/><rect x="1" y="12" width="14" height="3" fill="#8a8a8a"/></svg><span class="abs" style="left:61.500px">lowEnergyEyRateDSSD0</span></div>
<div class="trow" style="top:435.0px"><div class="abs" style="left:39px;top:7px;width:8px;border-top:1px dotted #b4b4bc"></div><svg class="abs" style="left:47.300px;top:2.200px" width="11.200" height="11.200" viewBox="0 0 16 16"><rect width="16" height="16" fill="#ececec"/><rect x=".5" y=".5" width="15" height="15" fill="none" stroke="#b5b5b5"/><path d="M2 15V9h1V6h1v4h1V4h1v5h1V7h1v3h1V5h1v4h1V7h1v3h1V8h1v7z" fill="#6c6c6c"/><rect x="1" y="12" width="14" height="3" fill="#8a8a8a"/></svg><span class="abs" style="left:61.500px">lowEnergyExRateDSSD0</span></div>
<div class="trow" style="top:449.4px"><div class="abs" style="left:39px;top:7px;width:8px;border-top:1px dotted #b4b4bc"></div><svg class="abs" style="left:47.300px;top:2.200px" width="11.200" height="11.200" viewBox="0 0 16 16"><rect width="16" height="16" fill="#dfe9f5"/><rect x=".5" y=".5" width="15" height="15" fill="none" stroke="#6f93c0"/><path d="M2 3h3v2H2zM6 2h2v2H6zM10 3h3v2h-3zM3 6h2v2H3zM7 5h3v2H7zM12 6h2v2h-2zM2 9h2v2H2zM5 8h3v2H5zM9 9h2v2H9zM12 9h2v1h-2z" fill="#2d7fc1"/><rect x="1" y="11" width="14" height="4" fill="#1e6fb0"/><path d="M2 12h2v1H2zM6 13h3v1H6zM11 12h2v1h-2z" fill="#7fb6e6"/></svg><span class="abs" style="left:61.500px">lowEnergyExEyDSSD1</span></div>
<div class="trow" style="top:463.8px"><div class="abs" style="left:39px;top:7px;width:8px;border-top:1px dotted #b4b4bc"></div><svg class="abs" style="left:47.300px;top:2.200px" width="11.200" height="11.200" viewBox="0 0 16 16"><rect width="16" height="16" fill="#dfe9f5"/><rect x=".5" y=".5" width="15" height="15" fill="none" stroke="#6f93c0"/><path d="M2 3h3v2H2zM6 2h2v2H6zM10 3h3v2h-3zM3 6h2v2H3zM7 5h3v2H7zM12 6h2v2h-2zM2 9h2v2H2zM5 8h3v2H5zM9 9h2v2H9zM12 9h2v1h-2z" fill="#2d7fc1"/><rect x="1" y="11" width="14" height="4" fill="#1e6fb0"/><path d="M2 12h2v1H2zM6 13h3v1H6zM11 12h2v1h-2z" fill="#7fb6e6"/></svg><span class="abs" style="left:61.500px">highEnergyExEyDSSD1</span></div>
<div class="trow" style="top:478.2px"><div class="abs" style="left:39px;top:7px;width:8px;border-top:1px dotted #b4b4bc"></div><svg class="abs" style="left:47.300px;top:2.200px" width="11.200" height="11.200" viewBox="0 0 16 16"><rect width="16" height="16" fill="#dfe9f5"/><rect x=".5" y=".5" width="15" height="15" fill="none" stroke="#6f93c0"/><path d="M2 3h3v2H2zM6 2h2v2H6zM10 3h3v2h-3zM3 6h2v2H3zM7 5h3v2H7zM12 6h2v2h-2zM2 9h2v2H2zM5 8h3v2H5zM9 9h2v2H9zM12 9h2v1h-2z" fill="#2d7fc1"/><rect x="1" y="11" width="14" height="4" fill="#1e6fb0"/><path d="M2 12h2v1H2zM6 13h3v1H6zM11 12h2v1h-2z" fill="#7fb6e6"/></svg><span class="abs" style="left:61.500px">lowEnergyExEyPairDSSD1</span></div>
<div class="trow" style="top:492.6px"><div class="abs" style="left:39px;top:7px;width:8px;border-top:1px dotted #b4b4bc"></div><svg class="abs" style="left:47.300px;top:2.200px" width="11.200" height="11.200" viewBox="0 0 16 16"><rect width="16" height="16" fill="#dfe9f5"/><rect x=".5" y=".5" width="15" height="15" fill="none" stroke="#6f93c0"/><path d="M2 3h3v2H2zM6 2h2v2H6zM10 3h3v2h-3zM3 6h2v2H3zM7 5h3v2H7zM12 6h2v2h-2zM2 9h2v2H2zM5 8h3v2H5zM9 9h2v2H9zM12 9h2v1h-2z" fill="#2d7fc1"/><rect x="1" y="11" width="14" height="4" fill="#1e6fb0"/><path d="M2 12h2v1H2zM6 13h3v1H6zM11 12h2v1h-2z" fill="#7fb6e6"/></svg><span class="abs" style="left:61.500px">highEnergyExEyDSSDPair1</span></div>
<div class="trow" style="top:507.0px"><div class="abs" style="left:39px;top:7px;width:8px;border-top:1px dotted #b4b4bc"></div><svg class="abs" style="left:47.300px;top:2.200px" width="11.200" height="11.200" viewBox="0 0 16 16"><rect width="16" height="16" fill="#dfe9f5"/><rect x=".5" y=".5" width="15" height="15" fill="none" stroke="#6f93c0"/><path d="M2 3h3v2H2zM6 2h2v2H6zM10 3h3v2h-3zM3 6h2v2H3zM7 5h3v2H7zM12 6h2v2h-2zM2 9h2v2H2zM5 8h3v2H5zM9 9h2v2H9zM12 9h2v1h-2z" fill="#2d7fc1"/><rect x="1" y="11" width="14" height="4" fill="#1e6fb0"/><path d="M2 12h2v1H2zM6 13h3v1H6zM11 12h2v1h-2z" fill="#7fb6e6"/></svg><span class="abs" style="left:61.500px">xyMultiplicityDSSD1</span></div>
<div class="trow" style="top:521.4px"><div class="abs" style="left:39px;top:7px;width:8px;border-top:1px dotted #b4b4bc"></div><svg class="abs" style="left:47.300px;top:2.200px" width="11.200" height="11.200" viewBox="0 0 16 16"><rect width="16" height="16" fill="#dfe9f5"/><rect x=".5" y=".5" width="15" height="15" fill="none" stroke="#6f93c0"/><path d="M2 3h3v2H2zM6 2h2v2H6zM10 3h3v2h-3zM3 6h2v2H3zM7 5h3v2H7zM12 6h2v2h-2zM2 9h2v2H2zM5 8h3v2H5zM9 9h2v2H9zM12 9h2v1h-2z" fill="#2d7fc1"/><rect x="1" y="11" width="14" height="4" fill="#1e6fb0"/><path d="M2 12h2v1H2zM6 13h3v1H6zM11 12h2v1h-2z" fill="#7fb6e6"/></svg><span class="abs" style="left:61.500px">lowEnergyXYDSSD1</span></div>
<div class="trow" style="top:535.8px"><div class="abs" style="left:39px;top:7px;width:8px;border-top:1px dotted #b4b4bc"></div><svg class="abs" style="left:47.300px;top:2.200px" width="11.200" height="11.200" viewBox="0 0 16 16"><rect width="16" height="16" fill="#dfe9f5"/><rect x=".5" y=".5" width="15" height="15" fill="none" stroke="#6f93c0"/><path d="M2 3h3v2H2zM6 2h2v2H6zM10 3h3v2h-3zM3 6h2v2H3zM7 5h3v2H7zM12 6h2v2h-2zM2 9h2v2H2zM5 8h3v2H5zM9 9h2v2H9zM12 9h2v1h-2z" fill="#2d7fc1"/><rect x="1" y="11" width="14" height="4" fill="#1e6fb0"/><path d="M2 12h2v1H2zM6 13h3v1H6zM11 12h2v1h-2z" fill="#7fb6e6"/></svg><span class="abs" style="left:61.500px">highEnergyXYDSSD1</span></div>
<div class="trow" style="top:550.2px"><div class="abs" style="left:39px;top:7px;width:8px;border-top:1px dotted #b4b4bc"></div><svg class="abs" style="left:47.300px;top:2.200px" width="11.200" height="11.200" viewBox="0 0 16 16"><rect width="16" height="16" fill="#dfe9f5"/><rect x=".5" y=".5" width="15" height="15" fill="none" stroke="#6f93c0"/><path d="M2 3h3v2H2zM6 2h2v2H6zM10 3h3v2h-3zM3 6h2v2H3zM7 5h3v2H7zM12 6h2v2h-2zM2 9h2v2H2zM5 8h3v2H5zM9 9h2v2H9zM12 9h2v1h-2z" fill="#2d7fc1"/><rect x="1" y="11" width="14" height="4" fill="#1e6fb0"/><path d="M2 12h2v1H2zM6 13h3v1H6zM11 12h2v1h-2z" fill="#7fb6e6"/></svg><span class="abs" style="left:61.500px">lowEnergyXYRateDSSD1</span></div>
<div class="trow" style="top:564.6px"><div class="abs" style="left:39px;top:7px;width:8px;border-top:1px dotted #b4b4bc"></div><svg class="abs" style="left:47.300px;top:2.200px" width="11.200" height="11.200" viewBox="0 0 16 16"><rect width="16" height="16" fill="#dfe9f5"/><rect x=".5" y=".5" width="15" height="15" fill="none" stroke="#6f93c0"/><path d="M2 3h3v2H2zM6 2h2v2H6zM10 3h3v2h-3zM3 6h2v2H3zM7 5h3v2H7zM12 6h2v2h-2zM2 9h2v2H2zM5 8h3v2H5zM9 9h2v2H9zM12 9h2v1h-2z" fill="#2d7fc1"/><rect x="1" y="11" width="14" height="4" fill="#1e6fb0"/><path d="M2 12h2v1H2zM6 13h3v1H6zM11 12h2v1h-2z" fill="#7fb6e6"/></svg><span class="abs" style="left:61.500px">lowEnergyXYTotalDSSD1</span></div>
<div class="trow" style="top:579.0px"><div class="abs" style="left:39px;top:7px;width:8px;border-top:1px dotted #b4b4bc"></div><svg class="abs" style="left:47.300px;top:2.200px" width="11.200" height="11.200" viewBox="0 0 16 16"><rect width="16" height="16" fill="#dfe9f5"/><rect x=".5" y=".5" width="15" height="15" fill="none" stroke="#6f93c0"/><path d="M2 3h3v2H2zM6 2h2v2H6zM10 3h3v2h-3zM3 6h2v2H3zM7 5h3v2H7zM12 6h2v2h-2zM2 9h2v2H2zM5 8h3v2H5zM9 9h2v2H9zM12 9h2v1h-2z" fill="#2d7fc1"/><rect x="1" y="11" width="14" height="4" fill="#1e6fb0"/><path d="M2 12h2v1H2zM6 13h3v1H6zM11 12h2v1h-2z" fill="#7fb6e6"/></svg><span class="abs" style="left:61.500px">lowEnergyExXRateDSSD1</span></div>
<div class="trow" style="top:593.4px"><div class="abs" style="left:39px;top:7px;width:8px;border-top:1px dotted #b4b4bc"></div><svg class="abs" style="left:47.300px;top:2.200px" width="11.200" height="11.200" viewBox="0 0 16 16"><rect width="16" height="16" fill="#dfe9f5"/><rect x=".5" y=".5" width="15" height="15" fill="none" stroke="#6f93c0"/><path d="M2 3h3v2H2zM6 2h2v2H6zM10 3h3v2h-3zM3 6h2v2H3zM7 5h3v2H7zM12 6h2v2h-2zM2 9h2v2H2zM5 8h3v2H5zM9 9h2v2H9zM12 9h2v1h-2z" fill="#2d7fc1"/><rect x="1" y="11" width="14" height="4" fill="#1e6fb0"/><path d="M2 12h2v1H2zM6 13h3v1H6zM11 12h2v1h-2z" fill="#7fb6e6"/></svg><span class="abs" style="left:61.500px">lowEnergyEyYRateDSSD1</span></div>
<div class="trow" style="top:607.8px"><div class="abs" style="left:39px;top:7px;width:8px;border-top:1px dotted #b4b4bc"></div><svg class="abs" style="left:47.300px;top:2.200px" width="11.200" height="11.200" viewBox="0 0 16 16"><rect width="16" height="16" fill="#dfe9f5"/><rect x=".5" y=".5" width="15" height="15" fill="none" stroke="#6f93c0"/><path d="M2 3h3v2H2zM6 2h2v2H6zM10 3h3v2h-3zM3 6h2v2H3zM7 5h3v2H7zM12 6h2v2h-2zM2 9h2v2H2zM5 8h3v2H5zM9 9h2v2H9zM12 9h2v1h-2z" fill="#2d7fc1"/><rect x="1" y="11" width="14" height="4" fill="#1e6fb0"/><path d="M2 12h2v1H2zM6 13h3v1H6zM11 12h2v1h-2z" fill="#7fb6e6"/></svg><span class="abs" style="left:61.500px">lowEnergyExXTotalDSSD1</span></div>
<div class="trow" style="top:622.2px"><div class="abs" style="left:39px;top:7px;width:8px;border-top:1px dotted #b4b4bc"></div><svg class="abs" style="left:47.300px;top:2.200px" width="11.200" height="11.200" viewBox="0 0 16 16"><rect width="16" height="16" fill="#dfe9f5"/><rect x=".5" y=".5" width="15" height="15" fill="none" stroke="#6f93c0"/><path d="M2 3h3v2H2zM6 2h2v2H6zM10 3h3v2h-3zM3 6h2v2H3zM7 5h3v2H7zM12 6h2v2h-2zM2 9h2v2H2zM5 8h3v2H5zM9 9h2v2H9zM12 9h2v1h-2z" fill="#2d7fc1"/><rect x="1" y="11" width="14" height="4" fill="#1e6fb0"/><path d="M2 12h2v1H2zM6 13h3v1H6zM11 12h2v1h-2z" fill="#7fb6e6"/></svg><span class="abs" style="left:61.500px">lowEnergyEyYTotalDSSD1</span></div>
<div class="trow" style="top:636.6px"><div class="abs" style="left:39px;top:7px;width:8px;border-top:1px dotted #b4b4bc"></div><svg class="abs" style="left:47.300px;top:2.200px" width="11.200" height="11.200" viewBox="0 0 16 16"><rect width="16" height="16" fill="#ececec"/><rect x=".5" y=".5" width="15" height="15" fill="none" stroke="#b5b5b5"/><path d="M2 15V9h1V6h1v4h1V4h1v5h1V7h1v3h1V5h1v4h1V7h1v3h1V8h1v7z" fill="#6c6c6c"/><rect x="1" y="12" width="14" height="3" fill="#8a8a8a"/></svg><span class="abs" style="left:61.500px">lowEnergyEyTotalDSSD1</span></div>
<div class="trow" style="top:651.0px"><div class="abs" style="left:39px;top:7px;width:8px;border-top:1px dotted #b4b4bc"></div><svg class="abs" style="left:47.300px;top:2.200px" width="11.200" height="11.200" viewBox="0 0 16 16"><rect width="16" height="16" fill="#ececec"/><rect x=".5" y=".5" width="15" height="15" fill="none" stroke="#b5b5b5"/><path d="M2 15V9h1V6h1v4h1V4h1v5h1V7h1v3h1V5h1v4h1V7h1v3h1V8h1v7z" fill="#6c6c6c"/><rect x="1" y="12" width="14" height="3" fill="#8a8a8a"/></svg><span class="abs" style="left:61.500px">lowEnergyExTotalDSSD1</span></div>
<div class="trow" style="top:665.4px"><div class="abs" style="left:39px;top:7px;width:8px;border-top:1px dotted #b4b4bc"></div><svg class="abs" style="left:47.300px;top:2.200px" width="11.200" height="11.200" viewBox="0 0 16 16"><rect width="16" height="16" fill="#ececec"/><rect x=".5" y=".5" width="15" height="15" fill="none" stroke="#b5b5b5"/><path d="M2 15V9h1V6h1v4h1V4h1v5h1V7h1v3h1V5h1v4h1V7h1v3h1V8h1v7z" fill="#6c6c6c"/><rect x="1" y="12" width="14" height="3" fill="#8a8a8a"/></svg><span class="abs" style="left:61.500px">lowEnergyEyRateDSSD1</span></div>
<div class="trow" style="top:679.8px"><div class="abs" style="left:39px;top:7px;width:8px;border-top:1px dotted #b4b4bc"></div><svg class="abs" style="left:47.300px;top:2.200px" width="11.200" height="11.200" viewBox="0 0 16 16"><rect width="16" height="16" fill="#ececec"/><rect x=".5" y=".5" width="15" height="15" fill="none" stroke="#b5b5b5"/><path d="M2 15V9h1V6h1v4h1V4h1v5h1V7h1v3h1V5h1v4h1V7h1v3h1V8h1v7z" fill="#6c6c6c"/><rect x="1" y="12" width="14" height="3" fill="#8a8a8a"/></svg><span class="abs" style="left:61.500px">lowEnergyExRateDSSD1</span></div>
<div class="trow" style="top:694.2px"><div class="abs" style="left:39px;top:7px;width:8px;border-top:1px dotted #b4b4bc"></div><svg class="abs" style="left:47.300px;top:2.200px" width="11.200" height="11.200" viewBox="0 0 16 16"><rect width="16" height="16" fill="#dfe9f5"/><rect x=".5" y=".5" width="15" height="15" fill="none" stroke="#6f93c0"/><path d="M2 3h3v2H2zM6 2h2v2H6zM10 3h3v2h-3zM3 6h2v2H3zM7 5h3v2H7zM12 6h2v2h-2zM2 9h2v2H2zM5 8h3v2H5zM9 9h2v2H9zM12 9h2v1h-2z" fill="#2d7fc1"/><rect x="1" y="11" width="14" height="4" fill="#1e6fb0"/><path d="M2 12h2v1H2zM6 13h3v1H6zM11 12h2v1h-2z" fill="#7fb6e6"/></svg><span class="abs" style="left:61.500px">lowEnergyExEyDSSD2</span></div>
<div class="trow" style="top:708.6px"><div class="abs" style="left:39px;top:7px;width:8px;border-top:1px dotted #b4b4bc"></div><svg class="abs" style="left:47.300px;top:2.200px" width="11.200" height="11.200" viewBox="0 0 16 16"><rect width="16" height="16" fill="#dfe9f5"/><rect x=".5" y=".5" width="15" height="15" fill="none" stroke="#6f93c0"/><path d="M2 3h3v2H2zM6 2h2v2H6zM10 3h3v2h-3zM3 6h2v2H3zM7 5h3v2H7zM12 6h2v2h-2zM2 9h2v2H2zM5 8h3v2H5zM9 9h2v2H9zM12 9h2v1h-2z" fill="#2d7fc1"/><rect x="1" y="11" width="14" height="4" fill="#1e6fb0"/><path d="M2 12h2v1H2zM6 13h3v1H6zM11 12h2v1h-2z" fill="#7fb6e6"/></svg><span class="abs" style="left:61.500px">highEnergyExEyDSSD2</span></div>
<div class="trow" style="top:723.0px"><div class="abs" style="left:39px;top:7px;width:8px;border-top:1px dotted #b4b4bc"></div><svg class="abs" style="left:47.300px;top:2.200px" width="11.200" height="11.200" viewBox="0 0 16 16"><rect width="16" height="16" fill="#dfe9f5"/><rect x=".5" y=".5" width="15" height="15" fill="none" stroke="#6f93c0"/><path d="M2 3h3v2H2zM6 2h2v2H6zM10 3h3v2h-3zM3 6h2v2H3zM7 5h3v2H7zM12 6h2v2h-2zM2 9h2v2H2zM5 8h3v2H5zM9 9h2v2H9zM12 9h2v1h-2z" fill="#2d7fc1"/><rect x="1" y="11" width="14" height="4" fill="#1e6fb0"/><path d="M2 12h2v1H2zM6 13h3v1H6zM11 12h2v1h-2z" fill="#7fb6e6"/></svg><span class="abs" style="left:61.500px">lowEnergyExEyPairDSSD2</span></div>
<div class="trow" style="top:737.4px"><div class="abs" style="left:39px;top:7px;width:8px;border-top:1px dotted #b4b4bc"></div><svg class="abs" style="left:47.300px;top:2.200px" width="11.200" height="11.200" viewBox="0 0 16 16"><rect width="16" height="16" fill="#dfe9f5"/><rect x=".5" y=".5" width="15" height="15" fill="none" stroke="#6f93c0"/><path d="M2 3h3v2H2zM6 2h2v2H6zM10 3h3v2h-3zM3 6h2v2H3zM7 5h3v2H7zM12 6h2v2h-2zM2 9h2v2H2zM5 8h3v2H5zM9 9h2v2H9zM12 9h2v1h-2z" fill="#2d7fc1"/><rect x="1" y="11" width="14" height="4" fill="#1e6fb0"/><path d="M2 12h2v1H2zM6 13h3v1H6zM11 12h2v1h-2z" fill="#7fb6e6"/></svg><span class="abs" style="left:61.500px">highEnergyExEyDSSDPair2</span></div>
<div class="trow" style="top:751.8px"><div class="abs" style="left:39px;top:7px;width:8px;border-top:1px dotted #b4b4bc"></div><svg class="abs" style="left:47.300px;top:2.200px" width="11.200" height="11.200" viewBox="0 0 16 16"><rect width="16" height="16" fill="#dfe9f5"/><rect x=".5" y=".5" width="15" height="15" fill="none" stroke="#6f93c0"/><path d="M2 3h3v2H2zM6 2h2v2H6zM10 3h3v2h-3zM3 6h2v2H3zM7 5h3v2H7zM12 6h2v2h-2zM2 9h2v2H2zM5 8h3v2H5zM9 9h2v2H9zM12 9h2v1h-2z" fill="#2d7fc1"/><rect x="1" y="11" width="14" height="4" fill="#1e6fb0"/><path d="M2 12h2v1H2zM6 13h3v1H6zM11 12h2v1h-2z" fill="#7fb6e6"/></svg><span class="abs" style="left:61.500px">xyMultiplicityDSSD2</span></div>
<div class="trow" style="top:766.2px"><div class="abs" style="left:39px;top:7px;width:8px;border-top:1px dotted #b4b4bc"></div><svg class="abs" style="left:47.300px;top:2.200px" width="11.200" height="11.200" viewBox="0 0 16 16"><rect width="16" height="16" fill="#dfe9f5"/><rect x=".5" y=".5" width="15" height="15" fill="none" stroke="#6f93c0"/><path d="M2 3h3v2H2zM6 2h2v2H6zM10 3h3v2h-3zM3 6h2v2H3zM7 5h3v2H7zM12 6h2v2h-2zM2 9h2v2H2zM5 8h3v2H5zM9 9h2v2H9zM12 9h2v1h-2z" fill="#2d7fc1"/><rect x="1" y="11" width="14" height="4" fill="#1e6fb0"/><path d="M2 12h2v1H2zM6 13h3v1H6zM11 12h2v1h-2z" fill="#7fb6e6"/></svg><span class="abs" style="left:61.500px">lowEnergyXYDSSD2</span></div>
<div class="trow" style="top:780.6px"><div class="abs" style="left:39px;top:7px;width:8px;border-top:1px dotted #b4b4bc"></div><svg class="abs" style="left:47.300px;top:2.200px" width="11.200" height="11.200" viewBox="0 0 16 16"><rect width="16" height="16" fill="#dfe9f5"/><rect x=".5" y=".5" width="15" height="15" fill="none" stroke="#6f93c0"/><path d="M2 3h3v2H2zM6 2h2v2H6zM10 3h3v2h-3zM3 6h2v2H3zM7 5h3v2H7zM12 6h2v2h-2zM2 9h2v2H2zM5 8h3v2H5zM9 9h2v2H9zM12 9h2v1h-2z" fill="#2d7fc1"/><rect x="1" y="11" width="14" height="4" fill="#1e6fb0"/><path d="M2 12h2v1H2zM6 13h3v1H6zM11 12h2v1h-2z" fill="#7fb6e6"/></svg><span class="abs" style="left:61.500px">highEnergyXYDSSD2</span></div>
<div class="trow" style="top:795.0px"><div class="abs" style="left:39px;top:7px;width:8px;border-top:1px dotted #b4b4bc"></div><svg class="abs" style="left:47.300px;top:2.200px" width="11.200" height="11.200" viewBox="0 0 16 16"><rect width="16" height="16" fill="#dfe9f5"/><rect x=".5" y=".5" width="15" height="15" fill="none" stroke="#6f93c0"/><path d="M2 3h3v2H2zM6 2h2v2H6zM10 3h3v2h-3zM3 6h2v2H3zM7 5h3v2H7zM12 6h2v2h-2zM2 9h2v2H2zM5 8h3v2H5zM9 9h2v2H9zM12 9h2v1h-2z" fill="#2d7fc1"/><rect x="1" y="11" width="14" height="4" fill="#1e6fb0"/><path d="M2 12h2v1H2zM6 13h3v1H6zM11 12h2v1h-2z" fill="#7fb6e6"/></svg><span class="abs" style="left:61.500px">lowEnergyXYRateDSSD2</span></div>
<div class="trow" style="top:809.4px"><div class="abs" style="left:39px;top:7px;width:8px;border-top:1px dotted #b4b4bc"></div><svg class="abs" style="left:47.300px;top:2.200px" width="11.200" height="11.200" viewBox="0 0 16 16"><rect width="16" height="16" fill="#dfe9f5"/><rect x=".5" y=".5" width="15" height="15" fill="none" stroke="#6f93c0"/><path d="M2 3h3v2H2zM6 2h2v2H6zM10 3h3v2h-3zM3 6h2v2H3zM7 5h3v2H7zM12 6h2v2h-2zM2 9h2v2H2zM5 8h3v2H5zM9 9h2v2H9zM12 9h2v1h-2z" fill="#2d7fc1"/><rect x="1" y="11" width="14" height="4" fill="#1e6fb0"/><path d="M2 12h2v1H2zM6 13h3v1H6zM11 12h2v1h-2z" fill="#7fb6e6"/></svg><span class="abs" style="left:61.500px">lowEnergyXYTotalDSSD2</span></div>
<div class="trow" style="top:823.8px"><div class="abs" style="left:39px;top:7px;width:8px;border-top:1px dotted #b4b4bc"></div><svg class="abs" style="left:47.300px;top:2.200px" width="11.200" height="11.200" viewBox="0 0 16 16"><rect width="16" height="16" fill="#dfe9f5"/><rect x=".5" y=".5" width="15" height="15" fill="none" stroke="#6f93c0"/><path d="M2 3h3v2H2zM6 2h2v2H6zM10 3h3v2h-3zM3 6h2v2H3zM7 5h3v2H7zM12 6h2v2h-2zM2 9h2v2H2zM5 8h3v2H5zM9 9h2v2H9zM12 9h2v1h-2z" fill="#2d7fc1"/><rect x="1" y="11" width="14" height="4" fill="#1e6fb0"/><path d="M2 12h2v1H2zM6 13h3v1H6zM11 12h2v1h-2z" fill="#7fb6e6"/></svg><span class="abs" style="left:61.500px">lowEnergyExXRateDSSD2</span></div>
<div class="trow" style="top:838.2px"><div class="abs" style="left:39px;top:7px;width:8px;border-top:1px dotted #b4b4bc"></div><svg class="abs" style="left:47.300px;top:2.200px" width="11.200" height="11.200" viewBox="0 0 16 16"><rect width="16" height="16" fill="#dfe9f5"/><rect x=".5" y=".5" width="15" height="15" fill="none" stroke="#6f93c0"/><path d="M2 3h3v2H2zM6 2h2v2H6zM10 3h3v2h-3zM3 6h2v2H3zM7 5h3v2H7zM12 6h2v2h-2zM2 9h2v2H2zM5 8h3v2H5zM9 9h2v2H9zM12 9h2v1h-2z" fill="#2d7fc1"/><rect x="1" y="11" width="14" height="4" fill="#1e6fb0"/><path d="M2 12h2v1H2zM6 13h3v1H6zM11 12h2v1h-2z" fill="#7fb6e6"/></svg><span class="abs" style="left:61.500px">lowEnergyEyYRateDSSD2</span></div>
<div class="trow" style="top:852.6px"><div class="abs" style="left:39px;top:7px;width:8px;border-top:1px dotted #b4b4bc"></div><svg class="abs" style="left:47.300px;top:2.200px" width="11.200" height="11.200" viewBox="0 0 16 16"><rect width="16" height="16" fill="#dfe9f5"/><rect x=".5" y=".5" width="15" height="15" fill="none" stroke="#6f93c0"/><path d="M2 3h3v2H2zM6 2h2v2H6zM10 3h3v2h-3zM3 6h2v2H3zM7 5h3v2H7zM12 6h2v2h-2zM2 9h2v2H2zM5 8h3v2H5zM9 9h2v2H9zM12 9h2v1h-2z" fill="#2d7fc1"/><rect x="1" y="11" width="14" height="4" fill="#1e6fb0"/><path d="M2 12h2v1H2zM6 13h3v1H6zM11 12h2v1h-2z" fill="#7fb6e6"/></svg><span class="abs" style="left:61.500px">lowEnergyExXTotalDSSD2</span></div>
<div class="trow" style="top:867.0px"><div class="abs" style="left:39px;top:7px;width:8px;border-top:1px dotted #b4b4bc"></div><svg class="abs" style="left:47.300px;top:2.200px" width="11.200" height="11.200" viewBox="0 0 16 16"><rect width="16" height="16" fill="#dfe9f5"/><rect x=".5" y=".5" width="15" height="15" fill="none" stroke="#6f93c0"/><path d="M2 3h3v2H2zM6 2h2v2H6zM10 3h3v2h-3zM3 6h2v2H3zM7 5h3v2H7zM12 6h2v2h-2zM2 9h2v2H2zM5 8h3v2H5zM9 9h2v2H9zM12 9h2v1h-2z" fill="#2d7fc1"/><rect x="1" y="11" width="14" height="4" fill="#1e6fb0"/><path d="M2 12h2v1H2zM6 13h3v1H6zM11 12h2v1h-2z" fill="#7fb6e6"/></svg><span class="abs" style="left:61.500px">lowEnergyEyYTotalDSSD2</span></div>
<div class="trow" style="top:881.4px"><div class="abs" style="left:39px;top:7px;width:8px;border-top:1px dotted #b4b4bc"></div><svg class="abs" style="left:47.300px;top:2.200px" width="11.200" height="11.200" viewBox="0 0 16 16"><rect width="16" height="16" fill="#ececec"/><rect x=".5" y=".5" width="15" height="15" fill="none" stroke="#b5b5b5"/><path d="M2 15V9h1V6h1v4h1V4h1v5h1V7h1v3h1V5h1v4h1V7h1v3h1V8h1v7z" fill="#6c6c6c"/><rect x="1" y="12" width="14" height="3" fill="#8a8a8a"/></svg><span class="abs" style="left:61.500px">lowEnergyEyTotalDSSD2</span></div>
<div class="trow" style="top:895.8px"><div class="abs" style="left:39px;top:7px;width:8px;border-top:1px dotted #b4b4bc"></div><svg class="abs" style="left:47.300px;top:2.200px" width="11.200" height="11.200" viewBox="0 0 16 16"><rect width="16" height="16" fill="#ececec"/><rect x=".5" y=".5" width="15" height="15" fill="none" stroke="#b5b5b5"/><path d="M2 15V9h1V6h1v4h1V4h1v5h1V7h1v3h1V5h1v4h1V7h1v3h1V8h1v7z" fill="#6c6c6c"/><rect x="1" y="12" width="14" height="3" fill="#8a8a8a"/></svg><span class="abs" style="left:61.500px">lowEnergyExTotalDSSD2</span></div>
<div class="trow" style="top:910.2px"><div class="abs" style="left:39px;top:7px;width:8px;border-top:1px dotted #b4b4bc"></div><svg class="abs" style="left:47.300px;top:2.200px" width="11.200" height="11.200" viewBox="0 0 16 16"><rect width="16" height="16" fill="#ececec"/><rect x=".5" y=".5" width="15" height="15" fill="none" stroke="#b5b5b5"/><path d="M2 15V9h1V6h1v4h1V4h1v5h1V7h1v3h1V5h1v4h1V7h1v3h1V8h1v7z" fill="#6c6c6c"/><rect x="1" y="12" width="14" height="3" fill="#8a8a8a"/></svg><span class="abs" style="left:61.500px">lowEnergyEyRateDSSD2</span></div>
<div class="trow" style="top:924.6px"><div class="abs" style="left:39px;top:7px;width:8px;border-top:1px dotted #b4b4bc"></div><svg class="abs" style="left:47.300px;top:2.200px" width="11.200" height="11.200" viewBox="0 0 16 16"><rect width="16" height="16" fill="#ececec"/><rect x=".5" y=".5" width="15" height="15" fill="none" stroke="#b5b5b5"/><path d="M2 15V9h1V6h1v4h1V4h1v5h1V7h1v3h1V5h1v4h1V7h1v3h1V8h1v7z" fill="#6c6c6c"/><rect x="1" y="12" width="14" height="3" fill="#8a8a8a"/></svg><span class="abs" style="left:61.500px">lowEnergyExRateDSSD2</span></div>
<div class="abs" style="left:188px;top:103.500px;width:12px;height:830px;background:#c4c4c8"></div>
<div class="abs" style="left:191px;top:106.500px;width:6px;height:584.500px;border-radius:3px;background:#7c7c7f"></div>
</div>
<div id="split"></div>
<div id="main"><svg class="abs" style="left:0;top:0" width="1716" height="930" viewBox="204 113 1716 930" font-family="Liberation Sans,Arial,sans-serif">
<rect x="376.0" y="205.5" width="1373.5" height="742.9" fill="#fff"/>
<path d="M376.0 932.96h25.5M376.0 917.12h25.5M376.0 901.28h25.5M376.0 885.44h25.5M376.0 869.60h51M376.0 853.76h25.5M376.0 837.92h25.5M376.0 822.08h25.5M376.0 806.24h25.5M376.0 790.40h51M376.0 774.56h25.5M376.0 758.72h25.5M376.0 742.88h25.5M376.0 727.04h25.5M376.0 711.20h51M376.0 695.36h25.5M376.0 679.52h25.5M376.0 663.68h25.5M376.0 647.84h25.5M376.0 632.00h51M376.0 616.16h25.5M376.0 600.32h25.5M376.0 584.48h25.5M376.0 568.64h25.5M376.0 552.80h51M376.0 536.96h25.5M376.0 521.12h25.5M376.0 505.28h25.5M376.0 489.44h25.5M376.0 473.60h51M376.0 457.76h25.5M376.0 441.92h25.5M376.0 426.08h25.5M376.0 410.24h25.5M376.0 394.40h51M376.0 378.56h25.5M376.0 362.72h25.5M376.0 346.88h25.5M376.0 331.04h25.5M376.0 315.20h51M376.0 299.36h25.5M376.0 283.52h25.5M376.0 267.68h25.5M376.0 251.84h25.5M376.0 236.00h51M376.0 220.16h25.5M410.34 948.4v-14M444.68 948.4v-14M479.01 948.4v-14M513.35 948.4v-28M547.69 948.4v-14M582.02 948.4v-14M616.36 948.4v-14M650.70 948.4v-28M685.04 948.4v-14M719.38 948.4v-14M753.71 948.4v-14M788.05 948.4v-28M822.39 948.4v-14M856.72 948.4v-14M891.06 948.4v-14M925.40 948.4v-28M959.74 948.4v-14M994.07 948.4v-14M1028.41 948.4v-14M1062.75 948.4v-28M1097.09 948.4v-14M1131.42 948.4v-14M1165.76 948.4v-14M1200.10 948.4v-28M1234.44 948.4v-14M1268.78 948.4v-14M1303.11 948.4v-14M1337.45 948.4v-28M1371.79 948.4v-14M1406.12 948.4v-14M1440.46 948.4v-14M1474.80 948.4v-28M1509.14 948.4v-14M1543.47 948.4v-14M1577.81 948.4v-14M1612.15 948.4v-28M1646.49 948.4v-14M1680.83 948.4v-14M1715.16 948.4v-14" stroke="#333" stroke-width="1" fill="none"/>
<path d="M376.0 948.4V948.4H379.4V948.4H382.9V948.4H386.3V948.4H389.7V948.4H393.2V948.4H396.6V948.4H400.0V948.4H403.5V948.4H406.9V948.4H410.3V948.4H413.8V948.4H417.2V948.4H420.6V948.4H424.1V948.4H427.5V944.8H430.9V937.3H434.4V943.9H437.8V934.5H441.2V923.9H444.7V925.7H448.1V920.1H451.5V922.7H455.0V917.6H458.4V909.2H461.8V904.9H465.3V900.7H468.7V907.2H472.1V909.2H475.6V908.9H479.0V910.3H482.4V910.6H485.9V910.1H489.3V911.4H492.7V915.5H496.2V913.2H499.6V914.5H503.0V916.8H506.5V920.3H509.9V917.2H513.4V913.1H516.8V909.8H520.2V914.5H523.7V918.1H527.1V918.5H530.5V917.6H534.0V919.5H537.4V917.5H540.8V913.5H544.3V917.0H547.7V920.9H551.1V919.5H554.6V915.9H558.0V915.7H561.4V915.0H564.9V915.6H568.3V918.8H571.7V918.1H575.2V921.8H578.6V925.1H582.0V924.2H585.5V924.2H588.9V927.4H592.3V925.2H595.8V924.4H599.2V925.8H602.6V923.7H606.1V924.5H609.5V928.0H612.9V927.8H616.4V936.1H619.8V929.6H623.2V930.4H626.7V923.9H630.1V930.3H633.5V925.5H637.0V928.3H640.4V924.4H643.8V924.0H647.3V926.9H650.7V926.7H654.1V927.1H657.6V929.9H661.0V929.5H664.4V923.3H667.9V927.1H671.3V934.2H674.7V928.1H678.2V934.7H681.6V931.9H685.0V932.1H688.5V930.5H691.9V931.7H695.3V932.5H698.8V930.0H702.2V932.7H705.6V933.3H709.1V933.3H712.5V932.2H715.9V933.4H719.4V928.6H722.8V932.0H726.2V933.8H729.7V934.9H733.1V931.7H736.5V929.9H740.0V931.1H743.4V933.0H746.8V933.1H750.3V930.2H753.7V932.9H757.1V933.7H760.6V931.1H764.0V930.5H767.4V933.6H770.9V932.3H774.3V933.4H777.7V930.9H781.2V933.6H784.6V931.2H788.1V934.2H791.5V932.6H794.9V938.5H798.4V932.3H801.8V934.7H805.2V935.8H808.7V933.0H812.1V931.9H815.5V932.8H819.0V932.5H822.4V935.0H825.8V934.0H829.3V935.8H832.7V936.9H836.1V935.6H839.6V932.2H843.0V938.2H846.4V930.7H849.9V933.3H853.3V932.7H856.7V933.6H860.2V931.8H863.6V931.5H867.0V934.2H870.5V934.6H873.9V936.7H877.3V936.3H880.8V935.6H884.2V934.9H887.6V934.8H891.1V935.8H894.5V937.7H897.9V936.8H901.4V937.8H904.8V934.7H908.2V932.7H911.7V931.7H915.1V934.9H918.5V933.4H922.0V935.2H925.4V937.4H928.8V935.2H932.3V935.0H935.7V938.0H939.1V935.3H942.6V935.8H946.0V934.4H949.4V942.2H952.9V940.7H956.3V936.9H959.7V934.5H963.2V936.9H966.6V934.8H970.0V933.3H973.5V933.7H976.9V934.8H980.3V937.4H983.8V935.5H987.2V936.6H990.6V941.1H994.1V929.6H997.5V936.9H1000.9V934.9H1004.4V933.8H1007.8V935.2H1011.2V936.5H1014.7V935.7H1018.1V936.7H1021.5V935.0H1025.0V933.9H1028.4V934.6H1031.8V937.3H1035.3V937.5H1038.7V941.1H1042.1V934.8H1045.6V936.4H1049.0V937.0H1052.4V935.4H1055.9V936.2H1059.3V938.8H1062.7V938.5H1066.2V940.9H1069.6V941.4H1073.1V940.7H1076.5V942.5H1079.9V936.4H1083.4V936.0H1086.8V934.9H1090.2V938.5H1093.7V937.4H1097.1V936.8H1100.5V935.9H1104.0V935.9H1107.4V939.6H1110.8V937.9H1114.3V937.3H1117.7V935.4H1121.1V936.9H1124.6V936.2H1128.0V934.9H1131.4V934.6H1134.9V938.8H1138.3V935.1H1141.7V937.1H1145.2V938.9H1148.6V941.0H1152.0V939.3H1155.5V937.5H1158.9V946.3H1162.3V941.3H1165.8V941.7H1169.2V938.9H1172.6V939.2H1176.1V940.9H1179.5V940.7H1182.9V941.1H1186.4V942.7H1189.8V933.0H1193.2V939.3H1196.7V940.1H1200.1V946.8H1203.5V941.0H1207.0V940.5H1210.4V937.9H1213.8V933.6H1217.3V939.6H1220.7V940.8H1224.1V940.3H1227.6V939.9H1231.0V941.2H1234.4V937.8H1237.9V939.2H1241.3V938.4H1244.7V940.8H1248.2V938.8H1251.6V940.1H1255.0V940.0H1258.5V939.7H1261.9V941.8H1265.3V943.3H1268.8V939.2H1272.2V941.1H1275.6V940.2H1279.1V938.5H1282.5V937.6H1285.9V936.7H1289.4V940.4H1292.8V941.8H1296.2V942.9H1299.7V940.1H1303.1V942.9H1306.5V939.8H1310.0V938.8H1313.4V938.5H1316.8V947.6H1320.3V942.2H1323.7V943.4H1327.1V943.9H1330.6V941.4H1334.0V943.3H1337.5V941.1H1340.9V942.9H1344.3V941.4H1347.8V943.0H1351.2V940.4H1354.6V938.6H1358.1V941.6H1361.5V942.5H1364.9V943.5H1368.4V942.2H1371.8V938.8H1375.2V939.1H1378.7V940.3H1382.1V937.8H1385.5V936.9H1389.0V937.5H1392.4V939.9H1395.8V938.7H1399.3V938.3H1402.7V938.5H1406.1V937.5H1409.6V940.7H1413.0V939.0H1416.4V942.1H1419.9V939.3H1423.3V937.5H1426.7V936.6H1430.2V936.9H1433.6V940.4H1437.0V939.8H1440.5V940.1H1443.9V943.7H1447.3V942.1H1450.8V941.2H1454.2V942.7H1457.6V940.3H1461.1V939.8H1464.5V942.3H1467.9V946.5H1471.4V943.0H1474.8V941.6H1478.2V938.4H1481.7V941.4H1485.1V942.8H1488.5V936.9H1492.0V940.4H1495.4V942.6H1498.8V942.3H1502.3V941.2H1505.7V938.4H1509.1V937.9H1512.6V939.7H1516.0V938.1H1519.4V939.8H1522.9V933.4H1526.3V939.5H1529.7V938.4H1533.2V936.8H1536.6V938.2H1540.0V939.9H1543.5V940.0H1546.9V938.9H1550.3V940.6H1553.8V938.0H1557.2V940.0H1560.6V938.9H1564.1V941.8H1567.5V938.8H1570.9V939.1H1574.4V938.1H1577.8V940.4H1581.2V938.9H1584.7V938.6H1588.1V938.1H1591.5V940.5H1595.0V942.9H1598.4V940.2H1601.8V939.2H1605.3V941.2H1608.7V939.2H1612.1V940.8H1615.6V941.5H1619.0V938.4H1622.5V938.3H1625.9V938.8H1629.3V934.7H1632.8V941.4H1636.2V932.9H1639.6V931.1H1643.1V928.0H1646.5V927.7H1649.9V925.9H1653.4V925.0H1656.8V927.2H1660.2V931.4H1663.7V923H1667V907.0H1669.5V887.0H1672.3V858.6H1675.6V816.0H1679.3V748.0H1682.9V692.0H1686.6V628.0H1690.2V561.0H1693.6V459.0H1697.3V375.0H1700.9V290.0H1704.3V243.0H1707.7V262H1711V337.7H1714.3V446.8H1717.7V537.8H1721.2V666.5H1724.7V752.6H1728.3V818.0H1731.8V853.0H1735.0V891.8H1738.0V909.0H1741.0V929.0H1744.0V938.0H1747.0V944.0H1749.0V948.4" stroke="#3a3ab0" stroke-width="1" fill="none" stroke-linejoin="miter"/>
<rect x="376.0" y="205.5" width="1373.5" height="742.9" fill="none" stroke="#444" stroke-width="1.100"/>
<text x="371" y="958.3" font-size="32.600" text-anchor="end">0</text>
<text x="371" y="879.1" font-size="32.600" text-anchor="end">100</text>
<text x="371" y="799.9" font-size="32.600" text-anchor="end">200</text>
<text x="371" y="720.7" font-size="32.600" text-anchor="end">300</text>
<text x="371" y="641.5" font-size="32.600" text-anchor="end">400</text>
<text x="371" y="562.3" font-size="32.600" text-anchor="end">500</text>
<text x="371" y="483.1" font-size="32.600" text-anchor="end">600</text>
<text x="371" y="403.9" font-size="32.600" text-anchor="end">700</text>
<text x="371" y="324.7" font-size="32.600" text-anchor="end">800</text>
<text x="371" y="245.5" font-size="32.600" text-anchor="end">900</text>
<text x="376.0" y="981.300" font-size="32.600" text-anchor="middle">0</text>
<text x="513.4" y="981.300" font-size="32.600" text-anchor="middle">2</text>
<text x="650.7" y="981.300" font-size="32.600" text-anchor="middle">4</text>
<text x="788.0" y="981.300" font-size="32.600" text-anchor="middle">6</text>
<text x="925.4" y="981.300" font-size="32.600" text-anchor="middle">8</text>
<text x="1062.8" y="981.300" font-size="32.600" text-anchor="middle">10</text>
<text x="1200.1" y="981.300" font-size="32.600" text-anchor="middle">12</text>
<text x="1337.4" y="981.300" font-size="32.600" text-anchor="middle">14</text>
<text x="1474.8" y="981.300" font-size="32.600" text-anchor="middle">16</text>
<text x="1612.1" y="981.300" font-size="32.600" text-anchor="middle">18</text>
<text x="1749.5" y="981.300" font-size="32.600" text-anchor="middle">20</text>
<text x="1749.500" y="1010" font-size="32.600" text-anchor="end">Energy [MeV]</text>
<text transform="translate(289.500 207.500) rotate(-90)" font-size="32.600" text-anchor="end">Counts</text>
<text x="1754" y="943" font-size="32.600">×10<tspan dy="-11" font-size="21.500">3</tspan></text>
<rect x="1542.500" y="172.500" width="343" height="149" fill="#fff" stroke="#444" stroke-width="1.100"/>
<path d="M1542.500 210.500h343" stroke="#444" stroke-width="1.100"/>
<text x="1714" y="197.500" font-size="25.500" text-anchor="middle">lowEnergyExRateDSSD0</text>
<text x="1559.500" y="236.0" font-size="25.500">Entries</text><text x="1868.500" y="236.0" font-size="25.500" text-anchor="end">14505</text>
<text x="1559.500" y="272.5" font-size="25.500">Mean</text><text x="1868.500" y="272.5" font-size="25.500" text-anchor="end">14701</text>
<text x="1559.500" y="309.5" font-size="25.500">Std Dev</text><text x="1868.500" y="309.5" font-size="25.500" text-anchor="end">6691</text>
<rect x="207.500" y="1028" width="8.500" height="9" fill="#a9bce2"/>
</svg></div>
<div id="bpanel">
<div class="tb" style="left:5.500px;width:29px;top:5.500px;height:26px"></div>
<svg class="abs" style="left:12px;top:11px" width="16" height="15" viewBox="0 0 16 15"><rect x="8" y="1" width="6.500" height="5.500" fill="none" stroke="#2e3436" stroke-width="1.800"/><path d="M2 6.500v6.500h7" fill="none" stroke="#2e3436" stroke-width="1.800"/><path d="M2 7h3" stroke="#2e3436" stroke-width="1.800"/></svg>
<div class="tb" style="left:39.5px;width:249px"><span class="lbl" style="font-size:13.6px;letter-spacing:-0.580px">npg@carme-gsi:~/Programs/CAR...</span></div>
<div class="tb act" style="left:293.2px;width:249px"><span class="lbl" style="font-size:13.6px;letter-spacing:-0.216px">Online server — Mozilla Firefox</span></div>
<div class="tb" style="left:546.8px;width:249px"><span class="lbl" style="font-size:13.6px;letter-spacing:-0.662px">CARME_Sort</span></div>
<div class="tb" style="left:800.6px;width:249px"><span class="lbl" style="font-size:13.6px;letter-spacing:-0.366px">EventClustering.cpp (~/Programs/...</span></div>
<div class="tb" style="left:1054.2px;width:249px"><span class="lbl" style="font-size:13.6px;letter-spacing:-0.561px">npg@carme-gsi:~</span></div>
<div class="tb" style="left:1307.8px;width:249px"><span class="lbl" style="font-size:13.6px;letter-spacing:-0.497px;color:#8b8e8f">[AnyDesk]</span></div>
<svg class="abs" style="left:46.5px;top:9px" width="22.5" height="19.5" viewBox="0 0 22 19">
<rect x=".5" y=".5" width="21" height="18" rx="1.2" fill="#b9bbb8" stroke="#9a9c99"/>
<rect x="2" y="2" width="18" height="15" fill="#2f3534"/>
<path d="M4 5l2.300 1.700L4 8.400" stroke="#e8e8e8" stroke-width="1.100" fill="none"/><path d="M7 9.300h3" stroke="#e8e8e8" stroke-width="1.100"/>
</svg>
<svg class="abs" style="left:300px;top:6px" width="24" height="24" viewBox="0 0 24 24">
<defs><radialGradient id="ffg300" cx="65%" cy="20%" r="90%"><stop offset="0" stop-color="#ffe94a"/><stop offset=".35" stop-color="#ff9a1f"/><stop offset=".7" stop-color="#ff4a3d"/><stop offset="1" stop-color="#e8217a"/></radialGradient>
<radialGradient id="ffp300" cx="50%" cy="40%" r="60%"><stop offset="0" stop-color="#9a5cf0"/><stop offset="1" stop-color="#5b3fd0"/></radialGradient></defs>
<path d="M12 2.6c1.2-1.4 2.7-2 3.2-2.1 0 1.8 1 3 2.6 4.2C21 7 23 9.6 23 13.2 23 19 18.3 23.4 12.2 23.4 6 23.4 1.2 19 1.2 13.2c0-3 1.2-5.600 3-7.400 0 .8.200 1.500.600 2 .8-1.600 2.400-2.900 4.200-3.400C10 4 11 3.600 12 2.600z" fill="url(#ffg300)"/>
<circle cx="11.6" cy="13" r="5.3" fill="url(#ffp300)"/>
<path d="M5.500 9.500c2-2.600 5.500-2.600 7.500-1.200-1.600 0-2.600.800-2.800 1.800 2 .2 3 .6 3.200 1.600-1.600-.4-3 .4-3.600 1.600-.8 1.600.2 3.400 2.200 3.800-3 .8-6-.8-6.900-3.600-.4-1.400-.2-2.800.4-4z" fill="#ff8a16"/>
</svg>
<svg class="abs" style="left:557px;top:8px" width="17" height="21" viewBox="0 0 18 21">
<path d="M2 0.500h14l1.500 2v18h-17v-18z" fill="#6f9fe0" stroke="#3f6fb8" stroke-width=".8"/>
<rect x="2" y="3.500" width="14" height="7" fill="#88b2ec" stroke="#3f6fb8" stroke-width=".6"/>
<rect x="2" y="11.500" width="14" height="7" fill="#88b2ec" stroke="#3f6fb8" stroke-width=".6"/>
<rect x="6" y="6" width="6" height="2.400" rx=".6" fill="#f4f4f4" stroke="#777" stroke-width=".5"/>
<rect x="6" y="14" width="6" height="2.400" rx=".6" fill="#f4f4f4" stroke="#777" stroke-width=".5"/>
</svg>
<svg class="abs" style="left:808px;top:7px" width="22" height="23" viewBox="0 0 22 23"><rect x="1.500" y="2.500" width="16" height="19.500" fill="#fbfbfb" stroke="#9a9a9a"/><path d="M4 7h11M4 10h11M4 13h11M4 16h8M4 19h6" stroke="#bbb" stroke-width="1"/><path d="M3 2v2M6 2v2M9 2v2M12 2v2M15 2v2" stroke="#777" stroke-width="1"/><path d="M9 17l1-3.500L18.500 5l2.500 2.500L12.500 16z" fill="#e9a03a" stroke="#8a5a1a" stroke-width=".7"/><path d="M9 17l1-3.500 2.500 2.500z" fill="#333"/><path d="M17.300 6.200l2.500 2.500 1.200-1.200L18.500 5z" fill="#e0506a"/></svg>
<svg class="abs" style="left:1061px;top:9px" width="22.5" height="19.5" viewBox="0 0 22 19">
<rect x=".5" y=".5" width="21" height="18" rx="1.2" fill="#b9bbb8" stroke="#9a9c99"/>
<rect x="2" y="2" width="18" height="15" fill="#2f3534"/>
<path d="M4 5l2.300 1.700L4 8.400" stroke="#e8e8e8" stroke-width="1.100" fill="none"/><path d="M7 9.300h3" stroke="#e8e8e8" stroke-width="1.100"/>
</svg>
<svg class="abs" style="left:1315px;top:8px" width="21" height="21" viewBox="0 0 17 16" opacity=".55"><rect width="17" height="16" rx="1.500" fill="#ef443b"/><path d="M8.200 3.200L13 8l-4.800 4.800L6.900 11.500 10.400 8 6.900 4.500z" fill="#fff"/><path d="M5.200 4.800L8.400 8l-3.200 3.200L2 8z" fill="#fff"/></svg>
<div class="ws" style="left:1568.6px;width:53.500px;background:#dfdfdf;border-radius:3px 0 0 3px"><div class="abs" style="left:0;top:1px;width:39px;height:22px;background:#efefef;border:1px solid #d0d0d0"></div></div>
<div class="ws" style="left:1625.4px;width:53.500px"></div>
<div class="ws" style="left:1682.2px;width:53.500px"></div>
<div class="ws" style="left:1739.0px;width:53.500px;background:#dfdfdf"><div class="abs" style="left:2px;top:2px;width:19px;height:11px;background:#efefef;border:1px solid #d0d0d0"></div></div>
<div class="ws" style="left:1796.4px;width:53.500px;border:2px solid #7d7d7d;background:#f6f6f5"></div>
<div class="ws" style="left:1853.3px;width:53.500px;border-radius:0 3px 3px 0"></div>
</div>
</div>
<div id="right">
<svg class="abs" style="left:0;top:0" width="1920" height="1080" viewBox="0 0 48 27" preserveAspectRatio="none" ><defs><filter id="wbl" x="-10%" y="-10%" width="120%" height="120%"><feGaussianBlur stdDeviation="0.75"/></filter></defs><style>.wg rect{width:1.03px;height:1.03px}</style><g class="wg" filter="url(#wbl)"><rect x=-2 y=-2 fill=#0b3b5e /><rect x=-1 y=-2 fill=#0b3b5e /><rect x=0 y=-2 fill=#0c3c60 /><rect x=1 y=-2 fill=#0e3f63 /><rect x=2 y=-2 fill=#114267 /><rect x=3 y=-2 fill=#14466c /><rect x=4 y=-2 fill=#194a70 /><rect x=5 y=-2 fill=#1d4e74 /><rect x=6 y=-2 fill=#215277 /><rect x=7 y=-2 fill=#25567a /><rect x=8 y=-2 fill=#2a5b7e /><rect x=9 y=-2 fill=#316183 /><rect x=10 y=-2 fill=#3a6889 /><rect x=11 y=-2 fill=#42708f /><rect x=12 y=-2 fill=#497595 /><rect x=13 y=-2 fill=#4c7998 /><rect x=14 y=-2 fill=#4c7a99 /><rect x=15 y=-2 fill=#487a99 /><rect x=16 y=-2 fill=#437a98 /><rect x=17 y=-2 fill=#3e7c99 /><rect x=18 y=-2 fill=#3b7f9a /><rect x=19 y=-2 fill=#3d869d /><rect x=20 y=-2 fill=#438da1 /><rect x=21 y=-2 fill=#4b94a5 /><rect x=22 y=-2 fill=#539aa7 /><rect x=23 y=-2 fill=#5a9ea9 /><rect x=24 y=-2 fill=#61a2ab /><rect x=25 y=-2 fill=#66a5ad /><rect x=26 y=-2 fill=#68a7ae /><rect x=27 y=-2 fill=#68a8af /><rect x=28 y=-2 fill=#68a9ae /><rect x=29 y=-2 fill=#67a9ae /><rect x=30 y=-2 fill=#67a9ae /><rect x=31 y=-2 fill=#66a8ac /><rect x=32 y=-2 fill=#64a5aa /><rect x=33 y=-2 fill=#62a1a8 /><rect x=34 y=-2 fill=#5f9ba4 /><rect x=35 y=-2 fill=#5c949f /><rect x=36 y=-2 fill=#588e9a /><rect x=37 y=-2 fill=#548997 /><rect x=38 y=-2 fill=#508493 /><rect x=39 y=-2 fill=#4b7f90 /><rect x=40 y=-2 fill=#487b8e /><rect x=41 y=-2 fill=#45758c /><rect x=42 y=-2 fill=#3f6e88 /><rect x=43 y=-2 fill=#376681 /><rect x=44 y=-2 fill=#2e5c7a /><rect x=45 y=-2 fill=#245372 /><rect x=46 y=-2 fill=#19496a /><rect x=47 y=-2 fill=#0f3f62 /><rect x=48 y=-2 fill=#0a3b5f /><rect x=49 y=-2 fill=#0a3b5f /><rect x=-2 y=-1 fill=#0b3b5e /><rect x=-1 y=-1 fill=#0b3b5e /><rect x=0 y=-1 fill=#0c3c60 /><rect x=1 y=-1 fill=#0e3f63 /><rect x=2 y=-1 fill=#114267 /><rect x=3 y=-1 fill=#14466c /><rect x=4 y=-1 fill=#194a70 /><rect x=5 y=-1 fill=#1d4e74 /><rect x=6 y=-1 fill=#215277 /><rect x=7 y=-1 fill=#25567a /><rect x=8 y=-1 fill=#2a5b7e /><rect x=9 y=-1 fill=#316183 /><rect x=10 y=-1 fill=#3a6889 /><rect x=11 y=-1 fill=#42708f /><rect x=12 y=-1 fill=#497595 /><rect x=13 y=-1 fill=#4c7998 /><rect x=14 y=-1 fill=#4c7a99 /><rect x=15 y=-1 fill=#487a99 /><rect x=16 y=-1 fill=#437a98 /><rect x=17 y=-1 fill=#3e7c99 /><rect x=18 y=-1 fill=#3b7f9a /><rect x=19 y=-1 fill=#3d869d /><rect x=20 y=-1 fill=#438da1 /><rect x=21 y=-1 fill=#4b94a5 /><rect x=22 y=-1 fill=#539aa7 /><rect x=23 y=-1 fill=#5a9ea9 /><rect x=24 y=-1 fill=#61a2ab /><rect x=25 y=-1 fill=#66a5ad /><rect x=26 y=-1 fill=#68a7ae /><rect x=27 y=-1 fill=#68a8af /><rect x=28 y=-1 fill=#68a9ae /><rect x=29 y=-1 fill=#67a9ae /><rect x=30 y=-1 fill=#67a9ae /><rect x=31 y=-1 fill=#66a8ac /><rect x=32 y=-1 fill=#64a5aa /><rect x=33 y=-1 fill=#62a1a8 /><rect x=34 y=-1 fill=#5f9ba4 /><rect x=35 y=-1 fill=#5c949f /><rect x=36 y=-1 fill=#588e9a /><rect x=37 y=-1 fill=#548997 /><rect x=38 y=-1 fill=#508493 /><rect x=39 y=-1 fill=#4b7f90 /><rect x=40 y=-1 fill=#487b8e /><rect x=41 y=-1 fill=#45758c /><rect x=42 y=-1 fill=#3f6e88 /><rect x=43 y=-1 fill=#376681 /><rect x=44 y=-1 fill=#2e5c7a /><rect x=45 y=-1 fill=#245372 /><rect x=46 y=-1 fill=#19496a /><rect x=47 y=-1 fill=#0f3f62 /><rect x=48 y=-1 fill=#0a3b5f /><rect x=49 y=-1 fill=#0a3b5f /><rect x=-2 y=0 fill=#0d3e61 /><rect x=-1 y=0 fill=#0d3e61 /><rect x=0 y=0 fill=#0f3f63 /><rect x=1 y=0 fill=#114266 /><rect x=2 y=0 fill=#14466b /><rect x=3 y=0 fill=#184a6f /><rect x=4 y=0 fill=#1d4e74 /><rect x=5 y=0 fill=#215278 /><rect x=6 y=0 fill=#25567b /><rect x=7 y=0 fill=#2a5a7e /><rect x=8 y=0 fill=#2f5f82 /><rect x=9 y=0 fill=#376687 /><rect x=10 y=0 fill=#406e8d /><rect x=11 y=0 fill=#4a7694 /><rect x=12 y=0 fill=#517c9a /><rect x=13 y=0 fill=#55809d /><rect x=14 y=0 fill=#54809e /><rect x=15 y=0 fill=#507f9e /><rect x=16 y=0 fill=#4a7f9d /><rect x=17 y=0 fill=#44819d /><rect x=18 y=0 fill=#40849e /><rect x=19 y=0 fill=#428ba2 /><rect x=20 y=0 fill=#4994a6 /><rect x=21 y=0 fill=#519baa /><rect x=22 y=0 fill=#5aa2ad /><rect x=23 y=0 fill=#63a6b0 /><rect x=24 y=0 fill=#6aaab2 /><rect x=25 y=0 fill=#6faeb4 /><rect x=26 y=0 fill=#70afb5 /><rect x=27 y=0 fill=#70afb4 /><rect x=28 y=0 fill=#6fafb4 /><rect x=29 y=0 fill=#6eb0b3 /><rect x=30 y=0 fill=#6dafb3 /><rect x=31 y=0 fill=#6caeb2 /><rect x=32 y=0 fill=#6babb0 /><rect x=33 y=0 fill=#69a6ad /><rect x=34 y=0 fill=#66a1a9 /><rect x=35 y=0 fill=#639aa5 /><rect x=36 y=0 fill=#5f94a0 /><rect x=37 y=0 fill=#5c8f9d /><rect x=38 y=0 fill=#588a99 /><rect x=39 y=0 fill=#538596 /><rect x=40 y=0 fill=#508194 /><rect x=41 y=0 fill=#4c7b92 /><rect x=42 y=0 fill=#45748d /><rect x=43 y=0 fill=#3c6a86 /><rect x=44 y=0 fill=#32607e /><rect x=45 y=0 fill=#285675 /><rect x=46 y=0 fill=#1c4c6d /><rect x=47 y=0 fill=#114265 /><rect x=48 y=0 fill=#0c3e62 /><rect x=49 y=0 fill=#0c3e62 /><rect x=-2 y=1 fill=#124368 /><rect x=-1 y=1 fill=#124368 /><rect x=0 y=1 fill=#14456a /><rect x=1 y=1 fill=#17496d /><rect x=2 y=1 fill=#1b4d72 /><rect x=3 y=1 fill=#205277 /><rect x=4 y=1 fill=#25567b /><rect x=5 y=1 fill=#2a5a7f /><rect x=6 y=1 fill=#2f5e83 /><rect x=7 y=1 fill=#356386 /><rect x=8 y=1 fill=#3b698a /><rect x=9 y=1 fill=#44708f /><rect x=10 y=1 fill=#4f7997 /><rect x=11 y=1 fill=#5a829f /><rect x=12 y=1 fill=#638aa5 /><rect x=13 y=1 fill=#678ea9 /><rect x=14 y=1 fill=#668ea9 /><rect x=15 y=1 fill=#608ca7 /><rect x=16 y=1 fill=#588ba6 /><rect x=17 y=1 fill=#508ba6 /><rect x=18 y=1 fill=#4b8fa7 /><rect x=19 y=1 fill=#4e97ab /><rect x=20 y=1 fill=#55a1b1 /><rect x=21 y=1 fill=#5eaab6 /><rect x=22 y=1 fill=#69b1ba /><rect x=23 y=1 fill=#74b8be /><rect x=24 y=1 fill=#7dbdc0 /><rect x=25 y=1 fill=#81bfc2 /><rect x=26 y=1 fill=#82bfc1 /><rect x=27 y=1 fill=#80bdc0 /><rect x=28 y=1 fill=#7dbcbe /><rect x=29 y=1 fill=#7cbbbd /><rect x=30 y=1 fill=#7abbbc /><rect x=31 y=1 fill=#79b9bb /><rect x=32 y=1 fill=#77b6b9 /><rect x=33 y=1 fill=#75b1b7 /><rect x=34 y=1 fill=#73abb4 /><rect x=35 y=1 fill=#71a5b1 /><rect x=36 y=1 fill=#6e9fad /><rect x=37 y=1 fill=#6c9aa9 /><rect x=38 y=1 fill=#6896a6 /><rect x=39 y=1 fill=#6592a3 /><rect x=40 y=1 fill=#608da0 /><rect x=41 y=1 fill=#59869c /><rect x=42 y=1 fill=#507e97 /><rect x=43 y=1 fill=#45728f /><rect x=44 y=1 fill=#386685 /><rect x=45 y=1 fill=#2d5b7c /><rect x=46 y=1 fill=#215174 /><rect x=47 y=1 fill=#17486d /><rect x=48 y=1 fill=#124369 /><rect x=49 y=1 fill=#124369 /><rect x=-2 y=2 fill=#184a6f /><rect x=-1 y=2 fill=#184a6f /><rect x=0 y=2 fill=#1a4c71 /><rect x=1 y=2 fill=#1f5175 /><rect x=2 y=2 fill=#24567a /><rect x=3 y=2 fill=#2a5b7f /><rect x=4 y=2 fill=#2f5f83 /><rect x=5 y=2 fill=#346387 /><rect x=6 y=2 fill=#3a688b /><rect x=7 y=2 fill=#426e8f /><rect x=8 y=2 fill=#4a7494 /><rect x=9 y=2 fill=#547c99 /><rect x=10 y=2 fill=#5f85a0 /><rect x=11 y=2 fill=#6a8fa8 /><rect x=12 y=2 fill=#7497af /><rect x=13 y=2 fill=#799cb3 /><rect x=14 y=2 fill=#769bb3 /><rect x=15 y=2 fill=#6f98b1 /><rect x=16 y=2 fill=#6696af /><rect x=17 y=2 fill=#5e97af /><rect x=18 y=2 fill=#5a9bb0 /><rect x=19 y=2 fill=#5ba3b5 /><rect x=20 y=2 fill=#62adbb /><rect x=21 y=2 fill=#6bb6c0 /><rect x=22 y=2 fill=#76bec5 /><rect x=23 y=2 fill=#83c7ca /><rect x=24 y=2 fill=#8dcdcd /><rect x=25 y=2 fill=#92cfce /><rect x=26 y=2 fill=#92cdcd /><rect x=27 y=2 fill=#8fcaca /><rect x=28 y=2 fill=#8bc7c8 /><rect x=29 y=2 fill=#88c5c6 /><rect x=30 y=2 fill=#86c4c4 /><rect x=31 y=2 fill=#83c1c2 /><rect x=32 y=2 fill=#81bdc0 /><rect x=33 y=2 fill=#7fb8be /><rect x=34 y=2 fill=#7eb3bc /><rect x=35 y=2 fill=#7caeba /><rect x=36 y=2 fill=#7ba9b7 /><rect x=37 y=2 fill=#79a4b4 /><rect x=38 y=2 fill=#77a0b0 /><rect x=39 y=2 fill=#739bad /><rect x=40 y=2 fill=#6e96aa /><rect x=41 y=2 fill=#658ea5 /><rect x=42 y=2 fill=#59849d /><rect x=43 y=2 fill=#4c7995 /><rect x=44 y=2 fill=#3f6c8b /><rect x=45 y=2 fill=#336183 /><rect x=46 y=2 fill=#28587b /><rect x=47 y=2 fill=#1e4f74 /><rect x=48 y=2 fill=#194a70 /><rect x=49 y=2 fill=#194a70 /><rect x=-2 y=3 fill=#1f5176 /><rect x=-1 y=3 fill=#1f5176 /><rect x=0 y=3 fill=#225479 /><rect x=1 y=3 fill=#285a7e /><rect x=2 y=3 fill=#2f6083 /><rect x=3 y=3 fill=#366587 /><rect x=4 y=3 fill=#3b698b /><rect x=5 y=3 fill=#416e8f /><rect x=6 y=3 fill=#497394 /><rect x=7 y=3 fill=#527a99 /><rect x=8 y=3 fill=#5b809e /><rect x=9 y=3 fill=#6488a3 /><rect x=10 y=3 fill=#6f90a9 /><rect x=11 y=3 fill=#7999b0 /><rect x=12 y=3 fill=#82a1b6 /><rect x=13 y=3 fill=#86a5ba /><rect x=14 y=3 fill=#84a5ba /><rect x=15 y=3 fill=#7ca2b8 /><rect x=16 y=3 fill=#74a0b7 /><rect x=17 y=3 fill=#6ca1b6 /><rect x=18 y=3 fill=#68a5b8 /><rect x=19 y=3 fill=#69acbc /><rect x=20 y=3 fill=#6eb5c1 /><rect x=21 y=3 fill=#76bec7 /><rect x=22 y=3 fill=#82c7cc /><rect x=23 y=3 fill=#8ed0d1 /><rect x=24 y=3 fill=#98d6d5 /><rect x=25 y=3 fill=#9ed8d6 /><rect x=26 y=3 fill=#9ed7d5 /><rect x=27 y=3 fill=#9bd4d2 /><rect x=28 y=3 fill=#97d0cf /><rect x=29 y=3 fill=#93cdcc /><rect x=30 y=3 fill=#8fcac9 /><rect x=31 y=3 fill=#8cc6c7 /><rect x=32 y=3 fill=#89c2c5 /><rect x=33 y=3 fill=#87bdc3 /><rect x=34 y=3 fill=#86b8c1 /><rect x=35 y=3 fill=#85b3c0 /><rect x=36 y=3 fill=#84afbe /><rect x=37 y=3 fill=#83abbb /><rect x=38 y=3 fill=#80a6b8 /><rect x=39 y=3 fill=#7ca1b4 /><rect x=40 y=3 fill=#769bb0 /><rect x=41 y=3 fill=#6c93a9 /><rect x=42 y=3 fill=#6089a2 /><rect x=43 y=3 fill=#537e9b /><rect x=44 y=3 fill=#467292 /><rect x=45 y=3 fill=#3a678a /><rect x=46 y=3 fill=#2e5e82 /><rect x=47 y=3 fill=#24547b /><rect x=48 y=3 fill=#1e4f77 /><rect x=49 y=3 fill=#1e4f77 /><rect x=-2 y=4 fill=#26597d /><rect x=-1 y=4 fill=#26597d /><rect x=0 y=4 fill=#295c80 /><rect x=1 y=4 fill=#316285 /><rect x=2 y=4 fill=#39698a /><rect x=3 y=4 fill=#416f8e /><rect x=4 y=4 fill=#497493 /><rect x=5 y=4 fill=#517a98 /><rect x=6 y=4 fill=#5b819e /><rect x=7 y=4 fill=#6487a3 /><rect x=8 y=4 fill=#6d8da7 /><rect x=9 y=4 fill=#7593ab /><rect x=10 y=4 fill=#7e9ab1 /><rect x=11 y=4 fill=#87a2b7 /><rect x=12 y=4 fill=#8da8bb /><rect x=13 y=4 fill=#8fabbe /><rect x=14 y=4 fill=#8dabbe /><rect x=15 y=4 fill=#86a9bd /><rect x=16 y=4 fill=#7fa8bc /><rect x=17 y=4 fill=#78a8bc /><rect x=18 y=4 fill=#75acbe /><rect x=19 y=4 fill=#75b2c2 /><rect x=20 y=4 fill=#79bac6 /><rect x=21 y=4 fill=#81c3cb /><rect x=22 y=4 fill=#8bccd0 /><rect x=23 y=4 fill=#96d4d4 /><rect x=24 y=4 fill=#9fdad8 /><rect x=25 y=4 fill=#a4ddd9 /><rect x=26 y=4 fill=#a6dcd8 /><rect x=27 y=4 fill=#a3d9d6 /><rect x=28 y=4 fill=#a0d6d3 /><rect x=29 y=4 fill=#9bd1d0 /><rect x=30 y=4 fill=#96cdcd /><rect x=31 y=4 fill=#92c8ca /><rect x=32 y=4 fill=#8fc4c8 /><rect x=33 y=4 fill=#8dbfc6 /><rect x=34 y=4 fill=#8cbbc5 /><rect x=35 y=4 fill=#8bb7c4 /><rect x=36 y=4 fill=#8ab3c2 /><rect x=37 y=4 fill=#89afc0 /><rect x=38 y=4 fill=#86aabc /><rect x=39 y=4 fill=#81a5b8 /><rect x=40 y=4 fill=#7a9eb4 /><rect x=41 y=4 fill=#7196ae /><rect x=42 y=4 fill=#658da7 /><rect x=43 y=4 fill=#5982a0 /><rect x=44 y=4 fill=#4c7898 /><rect x=45 y=4 fill=#3f6d90 /><rect x=46 y=4 fill=#336289 /><rect x=47 y=4 fill=#275881 /><rect x=48 y=4 fill=#21537d /><rect x=49 y=4 fill=#21537d /><rect x=-2 y=5 fill=#2c6083 /><rect x=-1 y=5 fill=#2c6083 /><rect x=0 y=5 fill=#306486 /><rect x=1 y=5 fill=#396a8b /><rect x=2 y=5 fill=#43708f /><rect x=3 y=5 fill=#4d7895 /><rect x=4 y=5 fill=#59809c /><rect x=5 y=5 fill=#6488a3 /><rect x=6 y=5 fill=#6f8fa9 /><rect x=7 y=5 fill=#7896ae /><rect x=8 y=5 fill=#809bb1 /><rect x=9 y=5 fill=#879fb4 /><rect x=10 y=5 fill=#8da5b8 /><rect x=11 y=5 fill=#93aabc /><rect x=12 y=5 fill=#96aec0 /><rect x=13 y=5 fill=#96afc1 /><rect x=14 y=5 fill=#93afc1 /><rect x=15 y=5 fill=#8eadc1 /><rect x=16 y=5 fill=#87acc0 /><rect x=17 y=5 fill=#82adc0 /><rect x=18 y=5 fill=#7fb0c2 /><rect x=19 y=5 fill=#80b6c5 /><rect x=20 y=5 fill=#83bdc9 /><rect x=21 y=5 fill=#8ac6cd /><rect x=22 y=5 fill=#93ced2 /><rect x=23 y=5 fill=#9cd5d5 /><rect x=24 y=5 fill=#a4dbd8 /><rect x=25 y=5 fill=#a9ded9 /><rect x=26 y=5 fill=#abded9 /><rect x=27 y=5 fill=#a9dcd8 /><rect x=28 y=5 fill=#a6d8d5 /><rect x=29 y=5 fill=#a1d4d2 /><rect x=30 y=5 fill=#9ccfcf /><rect x=31 y=5 fill=#98c9cc /><rect x=32 y=5 fill=#94c4c9 /><rect x=33 y=5 fill=#91bfc8 /><rect x=34 y=5 fill=#90bcc7 /><rect x=35 y=5 fill=#8fb8c6 /><rect x=36 y=5 fill=#8eb5c5 /><rect x=37 y=5 fill=#8cb1c3 /><rect x=38 y=5 fill=#89acbf /><rect x=39 y=5 fill=#84a7bc /><rect x=40 y=5 fill=#7da1b7 /><rect x=41 y=5 fill=#7499b2 /><rect x=42 y=5 fill=#6990ab /><rect x=43 y=5 fill=#5d86a5 /><rect x=44 y=5 fill=#507c9e /><rect x=45 y=5 fill=#437196 /><rect x=46 y=5 fill=#36668e /><rect x=47 y=5 fill=#295b86 /><rect x=48 y=5 fill=#235682 /><rect x=49 y=5 fill=#235682 /><rect x=-2 y=6 fill=#326687 /><rect x=-1 y=6 fill=#326687 /><rect x=0 y=6 fill=#376a8a /><rect x=1 y=6 fill=#427190 /><rect x=2 y=6 fill=#4e7995 /><rect x=3 y=6 fill=#5b829d /><rect x=4 y=6 fill=#698ca5 /><rect x=5 y=6 fill=#7695ad /><rect x=6 y=6 fill=#829db3 /><rect x=7 y=6 fill=#8ba3b7 /><rect x=8 y=6 fill=#92a8ba /><rect x=9 y=6 fill=#97abbd /><rect x=10 y=6 fill=#9bafbf /><rect x=11 y=6 fill=#9db1c2 /><rect x=12 y=6 fill=#9eb3c4 /><rect x=13 y=6 fill=#9cb3c4 /><rect x=14 y=6 fill=#98b2c4 /><rect x=15 y=6 fill=#93b0c3 /><rect x=16 y=6 fill=#8daec2 /><rect x=17 y=6 fill=#89afc2 /><rect x=18 y=6 fill=#87b2c4 /><rect x=19 y=6 fill=#88b7c7 /><rect x=20 y=6 fill=#8bbfca /><rect x=21 y=6 fill=#91c7ce /><rect x=22 y=6 fill=#99ced2 /><rect x=23 y=6 fill=#a1d5d5 /><rect x=24 y=6 fill=#a8dad7 /><rect x=25 y=6 fill=#adddd9 /><rect x=26 y=6 fill=#afded9 /><rect x=27 y=6 fill=#aeddd9 /><rect x=28 y=6 fill=#abdad7 /><rect x=29 y=6 fill=#a7d5d4 /><rect x=30 y=6 fill=#a1cfd0 /><rect x=31 y=6 fill=#9cc9cd /><rect x=32 y=6 fill=#97c3ca /><rect x=33 y=6 fill=#95bfc9 /><rect x=34 y=6 fill=#93bcc8 /><rect x=35 y=6 fill=#92b9c8 /><rect x=36 y=6 fill=#91b5c7 /><rect x=37 y=6 fill=#8eb2c5 /><rect x=38 y=6 fill=#8badc2 /><rect x=39 y=6 fill=#86a8be /><rect x=40 y=6 fill=#7fa2ba /><rect x=41 y=6 fill=#769bb5 /><rect x=42 y=6 fill=#6c93b0 /><rect x=43 y=6 fill=#608aa9 /><rect x=44 y=6 fill=#5480a3 /><rect x=45 y=6 fill=#47759b /><rect x=46 y=6 fill=#396994 /><rect x=47 y=6 fill=#2b5e8b /><rect x=48 y=6 fill=#255887 /><rect x=49 y=6 fill=#255887 /><rect x=-2 y=7 fill=#376b8a /><rect x=-1 y=7 fill=#376b8a /><rect x=0 y=7 fill=#3d6f8d /><rect x=1 y=7 fill=#4a7895 /><rect x=2 y=7 fill=#59839d /><rect x=3 y=7 fill=#698ea6 /><rect x=4 y=7 fill=#7797ae /><rect x=5 y=7 fill=#85a0b5 /><rect x=6 y=7 fill=#91a9bb /><rect x=7 y=7 fill=#9aaebf /><rect x=8 y=7 fill=#9fb2c2 /><rect x=9 y=7 fill=#a3b5c4 /><rect x=10 y=7 fill=#a5b7c5 /><rect x=11 y=7 fill=#a5b7c6 /><rect x=12 y=7 fill=#a3b7c7 /><rect x=13 y=7 fill=#a0b6c6 /><rect x=14 y=7 fill=#9bb3c5 /><rect x=15 y=7 fill=#96b1c4 /><rect x=16 y=7 fill=#91afc3 /><rect x=17 y=7 fill=#8dafc3 /><rect x=18 y=7 fill=#8cb2c4 /><rect x=19 y=7 fill=#8db8c7 /><rect x=20 y=7 fill=#91bfcb /><rect x=21 y=7 fill=#97c6ce /><rect x=22 y=7 fill=#9eced2 /><rect x=23 y=7 fill=#a6d5d5 /><rect x=24 y=7 fill=#acdad7 /><rect x=25 y=7 fill=#b1ddd8 /><rect x=26 y=7 fill=#b3dfda /><rect x=27 y=7 fill=#b3deda /><rect x=28 y=7 fill=#b1dbd8 /><rect x=29 y=7 fill=#acd7d6 /><rect x=30 y=7 fill=#a7d0d2 /><rect x=31 y=7 fill=#a0cacf /><rect x=32 y=7 fill=#9bc4cc /><rect x=33 y=7 fill=#98c0cb /><rect x=34 y=7 fill=#96bcca /><rect x=35 y=7 fill=#95b9ca /><rect x=36 y=7 fill=#93b6c9 /><rect x=37 y=7 fill=#90b2c7 /><rect x=38 y=7 fill=#8caec4 /><rect x=39 y=7 fill=#87a9c1 /><rect x=40 y=7 fill=#80a3bd /><rect x=41 y=7 fill=#789db8 /><rect x=42 y=7 fill=#6e95b3 /><rect x=43 y=7 fill=#638dae /><rect x=44 y=7 fill=#5783a7 /><rect x=45 y=7 fill=#4a78a0 /><rect x=46 y=7 fill=#3b6c98 /><rect x=47 y=7 fill=#2d6090 /><rect x=48 y=7 fill=#265a8c /><rect x=49 y=7 fill=#265a8c /><rect x=-2 y=8 fill=#3a6e8b /><rect x=-1 y=8 fill=#3a6e8b /><rect x=0 y=8 fill=#41738f /><rect x=1 y=8 fill=#507d98 /><rect x=2 y=8 fill=#6189a1 /><rect x=3 y=8 fill=#7294ab /><rect x=4 y=8 fill=#809eb3 /><rect x=5 y=8 fill=#8da8ba /><rect x=6 y=8 fill=#99afc0 /><rect x=7 y=8 fill=#a1b5c4 /><rect x=8 y=8 fill=#a7b9c7 /><rect x=9 y=8 fill=#aabbc9 /><rect x=10 y=8 fill=#aabcca /><rect x=11 y=8 fill=#a9bcca /><rect x=12 y=8 fill=#a6bac9 /><rect x=13 y=8 fill=#a2b7c8 /><rect x=14 y=8 fill=#9db4c6 /><rect x=15 y=8 fill=#98b1c5 /><rect x=16 y=8 fill=#93afc4 /><rect x=17 y=8 fill=#90afc3 /><rect x=18 y=8 fill=#8fb2c5 /><rect x=19 y=8 fill=#91b7c7 /><rect x=20 y=8 fill=#95beca /><rect x=21 y=8 fill=#9bc6ce /><rect x=22 y=8 fill=#a3cdd2 /><rect x=23 y=8 fill=#aad5d5 /><rect x=24 y=8 fill=#b1dad8 /><rect x=25 y=8 fill=#b6deda /><rect x=26 y=8 fill=#b9e0db /><rect x=27 y=8 fill=#b9e0db /><rect x=28 y=8 fill=#b7ddda /><rect x=29 y=8 fill=#b3d9d8 /><rect x=30 y=8 fill=#add3d5 /><rect x=31 y=8 fill=#a6ccd2 /><rect x=32 y=8 fill=#a1c6cf /><rect x=33 y=8 fill=#9dc2ce /><rect x=34 y=8 fill=#9abecd /><rect x=35 y=8 fill=#98bbcd /><rect x=36 y=8 fill=#95b7cb /><rect x=37 y=8 fill=#91b3c9 /><rect x=38 y=8 fill=#8daec7 /><rect x=39 y=8 fill=#87a9c3 /><rect x=40 y=8 fill=#81a4c0 /><rect x=41 y=8 fill=#799ebc /><rect x=42 y=8 fill=#7097b7 /><rect x=43 y=8 fill=#668fb2 /><rect x=44 y=8 fill=#5a86ac /><rect x=45 y=8 fill=#4c7ba5 /><rect x=46 y=8 fill=#3e6f9d /><rect x=47 y=8 fill=#2f6394 /><rect x=48 y=8 fill=#285c8f /><rect x=49 y=8 fill=#285c8f /><rect x=-2 y=9 fill=#3c708b /><rect x=-1 y=9 fill=#3c708b /><rect x=0 y=9 fill=#437590 /><rect x=1 y=9 fill=#548099 /><rect x=2 y=9 fill=#658ca4 /><rect x=3 y=9 fill=#7598ad /><rect x=4 y=9 fill=#84a2b6 /><rect x=5 y=9 fill=#91abbd /><rect x=6 y=9 fill=#9bb2c3 /><rect x=7 y=9 fill=#a3b8c7 /><rect x=8 y=9 fill=#a9bcca /><rect x=9 y=9 fill=#abbfcc /><rect x=10 y=9 fill=#acbfcc /><rect x=11 y=9 fill=#aabecc /><rect x=12 y=9 fill=#a6bbcb /><rect x=13 y=9 fill=#a1b8c9 /><rect x=14 y=9 fill=#9cb4c7 /><rect x=15 y=9 fill=#97b1c5 /><rect x=16 y=9 fill=#93afc4 /><rect x=17 y=9 fill=#91afc3 /><rect x=18 y=9 fill=#90b1c4 /><rect x=19 y=9 fill=#93b6c7 /><rect x=20 y=9 fill=#97bcca /><rect x=21 y=9 fill=#9ec4ce /><rect x=22 y=9 fill=#a6cdd2 /><rect x=23 y=9 fill=#afd5d6 /><rect x=24 y=9 fill=#b7dcd9 /><rect x=25 y=9 fill=#bde1dc /><rect x=26 y=9 fill=#c0e3de /><rect x=27 y=9 fill=#c1e3de /><rect x=28 y=9 fill=#bee0dd /><rect x=29 y=9 fill=#badcdb /><rect x=30 y=9 fill=#b4d6d9 /><rect x=31 y=9 fill=#aed0d6 /><rect x=32 y=9 fill=#a8cad4 /><rect x=33 y=9 fill=#a3c5d2 /><rect x=34 y=9 fill=#9fc1d1 /><rect x=35 y=9 fill=#9bbdd0 /><rect x=36 y=9 fill=#97b8cf /><rect x=37 y=9 fill=#93b4cd /><rect x=38 y=9 fill=#8dafca /><rect x=39 y=9 fill=#87aac7 /><rect x=40 y=9 fill=#81a5c3 /><rect x=41 y=9 fill=#799fbf /><rect x=42 y=9 fill=#7199bb /><rect x=43 y=9 fill=#6892b6 /><rect x=44 y=9 fill=#5c89b0 /><rect x=45 y=9 fill=#4f7ea8 /><rect x=46 y=9 fill=#4072a0 /><rect x=47 y=9 fill=#316597 /><rect x=48 y=9 fill=#295e92 /><rect x=49 y=9 fill=#295e92 /><rect x=-2 y=10 fill=#3d718b /><rect x=-1 y=10 fill=#3d718b /><rect x=0 y=10 fill=#44768f /><rect x=1 y=10 fill=#55829a /><rect x=2 y=10 fill=#668ea4 /><rect x=3 y=10 fill=#7599ae /><rect x=4 y=10 fill=#83a3b6 /><rect x=5 y=10 fill=#8fabbd /><rect x=6 y=10 fill=#99b3c3 /><rect x=7 y=10 fill=#a1b9c8 /><rect x=8 y=10 fill=#a7bdcb /><rect x=9 y=10 fill=#a9c0cd /><rect x=10 y=10 fill=#aac0cd /><rect x=11 y=10 fill=#a7becd /><rect x=12 y=10 fill=#a3bbcb /><rect x=13 y=10 fill=#9fb7c9 /><rect x=14 y=10 fill=#99b3c6 /><rect x=15 y=10 fill=#95afc4 /><rect x=16 y=10 fill=#91adc3 /><rect x=17 y=10 fill=#8fadc2 /><rect x=18 y=10 fill=#8fafc3 /><rect x=19 y=10 fill=#92b3c5 /><rect x=20 y=10 fill=#98bac9 /><rect x=21 y=10 fill=#9fc2cd /><rect x=22 y=10 fill=#a9ccd2 /><rect x=23 y=10 fill=#b3d5d7 /><rect x=24 y=10 fill=#bcdedb /><rect x=25 y=10 fill=#c4e4df /><rect x=26 y=10 fill=#c8e7e1 /><rect x=27 y=10 fill=#c9e7e1 /><rect x=28 y=10 fill=#c7e4e1 /><rect x=29 y=10 fill=#c2e0df /><rect x=30 y=10 fill=#bcdadd /><rect x=31 y=10 fill=#b6d4db /><rect x=32 y=10 fill=#afced9 /><rect x=33 y=10 fill=#aac9d7 /><rect x=34 y=10 fill=#a5c4d6 /><rect x=35 y=10 fill=#a0bfd4 /><rect x=36 y=10 fill=#9bbbd3 /><rect x=37 y=10 fill=#95b5d0 /><rect x=38 y=10 fill=#8eb0cd /><rect x=39 y=10 fill=#88abca /><rect x=40 y=10 fill=#81a6c6 /><rect x=41 y=10 fill=#7aa0c3 /><rect x=42 y=10 fill=#739bbe /><rect x=43 y=10 fill=#6994b9 /><rect x=44 y=10 fill=#5f8bb3 /><rect x=45 y=10 fill=#5180ab /><rect x=46 y=10 fill=#4273a3 /><rect x=47 y=10 fill=#326699 /><rect x=48 y=10 fill=#2a5f94 /><rect x=49 y=10 fill=#2a5f94 /><rect x=-2 y=11 fill=#3e738c /><rect x=-1 y=11 fill=#3e738c /><rect x=0 y=11 fill=#467890 /><rect x=1 y=11 fill=#56849a /><rect x=2 y=11 fill=#668fa5 /><rect x=3 y=11 fill=#7399ae /><rect x=4 y=11 fill=#80a2b5 /><rect x=5 y=11 fill=#8baabc /><rect x=6 y=11 fill=#94b1c2 /><rect x=7 y=11 fill=#9cb7c7 /><rect x=8 y=11 fill=#a2bcca /><rect x=9 y=11 fill=#a5bfcc /><rect x=10 y=11 fill=#a5bfcd /><rect x=11 y=11 fill=#a3bdcc /><rect x=12 y=11 fill=#9fb9ca /><rect x=13 y=11 fill=#9ab4c7 /><rect x=14 y=11 fill=#95b0c5 /><rect x=15 y=11 fill=#91adc3 /><rect x=16 y=11 fill=#8eabc1 /><rect x=17 y=11 fill=#8caac1 /><rect x=18 y=11 fill=#8dabc1 /><rect x=19 y=11 fill=#90afc4 /><rect x=20 y=11 fill=#96b6c7 /><rect x=21 y=11 fill=#9fbfcc /><rect x=22 y=11 fill=#aacad2 /><rect x=23 y=11 fill=#b7d5d8 /><rect x=24 y=11 fill=#c2e0de /><rect x=25 y=11 fill=#cbe7e2 /><rect x=26 y=11 fill=#d0ebe4 /><rect x=27 y=11 fill=#d2ebe5 /><rect x=28 y=11 fill=#d0e9e5 /><rect x=29 y=11 fill=#cce4e4 /><rect x=30 y=11 fill=#c5dfe2 /><rect x=31 y=11 fill=#bed9e0 /><rect x=32 y=11 fill=#b7d2de /><rect x=33 y=11 fill=#b1cddd /><rect x=34 y=11 fill=#abc8db /><rect x=35 y=11 fill=#a6c3d9 /><rect x=36 y=11 fill=#9fbed7 /><rect x=37 y=11 fill=#98b8d4 /><rect x=38 y=11 fill=#90b2d1 /><rect x=39 y=11 fill=#89accd /><rect x=40 y=11 fill=#82a7ca /><rect x=41 y=11 fill=#7ca2c6 /><rect x=42 y=11 fill=#749dc1 /><rect x=43 y=11 fill=#6b96bc /><rect x=44 y=11 fill=#608db5 /><rect x=45 y=11 fill=#5281ad /><rect x=46 y=11 fill=#4374a4 /><rect x=47 y=11 fill=#33669a /><rect x=48 y=11 fill=#2b6095 /><rect x=49 y=11 fill=#2b6095 /><rect x=-2 y=12 fill=#40768e /><rect x=-1 y=12 fill=#40768e /><rect x=0 y=12 fill=#477b92 /><rect x=1 y=12 fill=#57859b /><rect x=2 y=12 fill=#648fa4 /><rect x=3 y=12 fill=#6f97ac /><rect x=4 y=12 fill=#7a9fb2 /><rect x=5 y=12 fill=#83a6b9 /><rect x=6 y=12 fill=#8cadbf /><rect x=7 y=12 fill=#94b4c4 /><rect x=8 y=12 fill=#9bb9c8 /><rect x=9 y=12 fill=#9fbccb /><rect x=10 y=12 fill=#9fbccb /><rect x=11 y=12 fill=#9db9ca /><rect x=12 y=12 fill=#98b5c8 /><rect x=13 y=12 fill=#93b1c5 /><rect x=14 y=12 fill=#8facc3 /><rect x=15 y=12 fill=#8ca9c1 /><rect x=16 y=12 fill=#89a7bf /><rect x=17 y=12 fill=#88a6be /><rect x=18 y=12 fill=#89a7bf /><rect x=19 y=12 fill=#8caac1 /><rect x=20 y=12 fill=#92b0c5 /><rect x=21 y=12 fill=#9dbaca /><rect x=22 y=12 fill=#aac7d1 /><rect x=23 y=12 fill=#b9d4d9 /><rect x=24 y=12 fill=#c8e1e0 /><rect x=25 y=12 fill=#d3eae5 /><rect x=26 y=12 fill=#d9eee8 /><rect x=27 y=12 fill=#dbefe9 /><rect x=28 y=12 fill=#daede9 /><rect x=29 y=12 fill=#d5e9e8 /><rect x=30 y=12 fill=#cfe4e6 /><rect x=31 y=12 fill=#c7dee5 /><rect x=32 y=12 fill=#bfd7e3 /><rect x=33 y=12 fill=#b9d2e2 /><rect x=34 y=12 fill=#b3cde0 /><rect x=35 y=12 fill=#acc7de /><rect x=36 y=12 fill=#a4c1db /><rect x=37 y=12 fill=#9cbbd8 /><rect x=38 y=12 fill=#93b4d5 /><rect x=39 y=12 fill=#8baed1 /><rect x=40 y=12 fill=#84a9cd /><rect x=41 y=12 fill=#7ea4c9 /><rect x=42 y=12 fill=#779fc5 /><rect x=43 y=12 fill=#6e98bf /><rect x=44 y=12 fill=#628fb7 /><rect x=45 y=12 fill=#5483ae /><rect x=46 y=12 fill=#4475a4 /><rect x=47 y=12 fill=#33679a /><rect x=48 y=12 fill=#2b6094 /><rect x=49 y=12 fill=#2b6094 /><rect x=-2 y=13 fill=#407890 /><rect x=-1 y=13 fill=#407890 /><rect x=0 y=13 fill=#467c94 /><rect x=1 y=13 fill=#54859b /><rect x=2 y=13 fill=#5f8da2 /><rect x=3 y=13 fill=#6993a7 /><rect x=4 y=13 fill=#719bae /><rect x=5 y=13 fill=#79a2b5 /><rect x=6 y=13 fill=#81a9bc /><rect x=7 y=13 fill=#89b0c1 /><rect x=8 y=13 fill=#91b5c5 /><rect x=9 y=13 fill=#97b9c8 /><rect x=10 y=13 fill=#98b8c8 /><rect x=11 y=13 fill=#95b5c7 /><rect x=12 y=13 fill=#8fb0c5 /><rect x=13 y=13 fill=#8babc2 /><rect x=14 y=13 fill=#87a8c0 /><rect x=15 y=13 fill=#86a5be /><rect x=16 y=13 fill=#84a3bd /><rect x=17 y=13 fill=#84a2bc /><rect x=18 y=13 fill=#84a1bc /><rect x=19 y=13 fill=#86a3be /><rect x=20 y=13 fill=#8da9c2 /><rect x=21 y=13 fill=#98b4c8 /><rect x=22 y=13 fill=#a8c2d0 /><rect x=23 y=13 fill=#bbd2d8 /><rect x=24 y=13 fill=#cce1e1 /><rect x=25 y=13 fill=#daece7 /><rect x=26 y=13 fill=#e2f2ea /><rect x=27 y=13 fill=#e4f3ec /><rect x=28 y=13 fill=#e3f2ec /><rect x=29 y=13 fill=#dfeeeb /><rect x=30 y=13 fill=#d9e9ea /><rect x=31 y=13 fill=#d1e3e9 /><rect x=32 y=13 fill=#c9dde7 /><rect x=33 y=13 fill=#c1d7e6 /><rect x=34 y=13 fill=#bad2e4 /><rect x=35 y=13 fill=#b3cce2 /><rect x=36 y=13 fill=#aac5e0 /><rect x=37 y=13 fill=#a1bedc /><rect x=38 y=13 fill=#98b7d9 /><rect x=39 y=13 fill=#8fb1d5 /><rect x=40 y=13 fill=#88acd1 /><rect x=41 y=13 fill=#82a8cd /><rect x=42 y=13 fill=#7ba3c8 /><rect x=43 y=13 fill=#729cc2 /><rect x=44 y=13 fill=#6692ba /><rect x=45 y=13 fill=#5685b0 /><rect x=46 y=13 fill=#4576a5 /><rect x=47 y=13 fill=#336799 /><rect x=48 y=13 fill=#2a6093 /><rect x=49 y=13 fill=#2a6093 /><rect x=-2 y=14 fill=#3d7991 /><rect x=-1 y=14 fill=#3d7991 /><rect x=0 y=14 fill=#437d95 /><rect x=1 y=14 fill=#4e859b /><rect x=2 y=14 fill=#588ba0 /><rect x=3 y=14 fill=#6091a5 /><rect x=4 y=14 fill=#6698ab /><rect x=5 y=14 fill=#6d9eb2 /><rect x=6 y=14 fill=#74a5b8 /><rect x=7 y=14 fill=#7dabbd /><rect x=8 y=14 fill=#86b1c1 /><rect x=9 y=14 fill=#8eb5c4 /><rect x=10 y=14 fill=#90b4c5 /><rect x=11 y=14 fill=#8bafc3 /><rect x=12 y=14 fill=#84a9c1 /><rect x=13 y=14 fill=#80a5bf /><rect x=14 y=14 fill=#7fa2bd /><rect x=15 y=14 fill=#80a1bc /><rect x=16 y=14 fill=#809fbb /><rect x=17 y=14 fill=#809eba /><rect x=18 y=14 fill=#7f9cba /><rect x=19 y=14 fill=#7f9cbb /><rect x=20 y=14 fill=#85a1bf /><rect x=21 y=14 fill=#91acc5 /><rect x=22 y=14 fill=#a4bcce /><rect x=23 y=14 fill=#bbd0d8 /><rect x=24 y=14 fill=#d1e2e1 /><rect x=25 y=14 fill=#e1eee8 /><rect x=26 y=14 fill=#eaf5ed /><rect x=27 y=14 fill=#edf7ef /><rect x=28 y=14 fill=#ecf6ef /><rect x=29 y=14 fill=#e8f3ef /><rect x=30 y=14 fill=#e2eeed /><rect x=31 y=14 fill=#dae8ec /><rect x=32 y=14 fill=#d1e2eb /><rect x=33 y=14 fill=#c9dcea /><rect x=34 y=14 fill=#c2d7e9 /><rect x=35 y=14 fill=#bad1e7 /><rect x=36 y=14 fill=#b0c9e4 /><rect x=37 y=14 fill=#a5c2e0 /><rect x=38 y=14 fill=#9bbadc /><rect x=39 y=14 fill=#93b5d8 /><rect x=40 y=14 fill=#8db0d5 /><rect x=41 y=14 fill=#87acd1 /><rect x=42 y=14 fill=#80a7cc /><rect x=43 y=14 fill=#77a0c6 /><rect x=44 y=14 fill=#6a96bd /><rect x=45 y=14 fill=#5a89b2 /><rect x=46 y=14 fill=#4779a6 /><rect x=47 y=14 fill=#336898 /><rect x=48 y=14 fill=#2a6092 /><rect x=49 y=14 fill=#2a6092 /><rect x=-2 y=15 fill=#3a7992 /><rect x=-1 y=15 fill=#3a7992 /><rect x=0 y=15 fill=#3e7d96 /><rect x=1 y=15 fill=#47849c /><rect x=2 y=15 fill=#4f8ba1 /><rect x=3 y=15 fill=#5690a5 /><rect x=4 y=15 fill=#5c96aa /><rect x=5 y=15 fill=#629caf /><rect x=6 y=15 fill=#68a1b4 /><rect x=7 y=15 fill=#71a7b9 /><rect x=8 y=15 fill=#7bacbd /><rect x=9 y=15 fill=#82afc0 /><rect x=10 y=15 fill=#84aec1 /><rect x=11 y=15 fill=#7ea8bf /><rect x=12 y=15 fill=#78a1bd /><rect x=13 y=15 fill=#759dbb /><rect x=14 y=15 fill=#779cba /><rect x=15 y=15 fill=#7b9dba /><rect x=16 y=15 fill=#7e9dba /><rect x=17 y=15 fill=#7e9bb9 /><rect x=18 y=15 fill=#7a97b7 /><rect x=19 y=15 fill=#7895b8 /><rect x=20 y=15 fill=#7c98bb /><rect x=21 y=15 fill=#89a4c2 /><rect x=22 y=15 fill=#9fb7cc /><rect x=23 y=15 fill=#bcced8 /><rect x=24 y=15 fill=#d8e4e3 /><rect x=25 y=15 fill=#e9f2eb /><rect x=26 y=15 fill=#f2f8ef /><rect x=27 y=15 fill=#f5faf2 /><rect x=28 y=15 fill=#f4f9f2 /><rect x=29 y=15 fill=#f0f7f1 /><rect x=30 y=15 fill=#eaf2ef /><rect x=31 y=15 fill=#e1ecee /><rect x=32 y=15 fill=#d7e5ed /><rect x=33 y=15 fill=#cfe0ed /><rect x=34 y=15 fill=#c8dbec /><rect x=35 y=15 fill=#bfd5ea /><rect x=36 y=15 fill=#b4cce7 /><rect x=37 y=15 fill=#a8c4e3 /><rect x=38 y=15 fill=#9dbcdf /><rect x=39 y=15 fill=#96b7db /><rect x=40 y=15 fill=#90b3d8 /><rect x=41 y=15 fill=#8bb0d4 /><rect x=42 y=15 fill=#85acd0 /><rect x=43 y=15 fill=#7ca5c9 /><rect x=44 y=15 fill=#6f9bc1 /><rect x=45 y=15 fill=#5e8db6 /><rect x=46 y=15 fill=#497ca9 /><rect x=47 y=15 fill=#356a9b /><rect x=48 y=15 fill=#2b6294 /><rect x=49 y=15 fill=#2b6294 /><rect x=-2 y=16 fill=#367993 /><rect x=-1 y=16 fill=#367993 /><rect x=0 y=16 fill=#3b7d97 /><rect x=1 y=16 fill=#43849c /><rect x=2 y=16 fill=#498ba1 /><rect x=3 y=16 fill=#4f90a6 /><rect x=4 y=16 fill=#5595ab /><rect x=5 y=16 fill=#5b9aaf /><rect x=6 y=16 fill=#609eb2 /><rect x=7 y=16 fill=#68a3b6 /><rect x=8 y=16 fill=#71a7b9 /><rect x=9 y=16 fill=#75a8bb /><rect x=10 y=16 fill=#75a5bb /><rect x=11 y=16 fill=#71a0ba /><rect x=12 y=16 fill=#6b99b8 /><rect x=13 y=16 fill=#6a96b7 /><rect x=14 y=16 fill=#7097b8 /><rect x=15 y=16 fill=#789bb9 /><rect x=16 y=16 fill=#7f9eb9 /><rect x=17 y=16 fill=#7f9bb8 /><rect x=18 y=16 fill=#7895b6 /><rect x=19 y=16 fill=#718fb5 /><rect x=20 y=16 fill=#7391b8 /><rect x=21 y=16 fill=#819dc0 /><rect x=22 y=16 fill=#99b2cb /><rect x=23 y=16 fill=#bfd0da /><rect x=24 y=16 fill=#e0eae6 /><rect x=25 y=16 fill=#f1f6ed /><rect x=26 y=16 fill=#f9fcf2 /><rect x=27 y=16 fill=#fafcf4 /><rect x=28 y=16 fill=#f8fbf4 /><rect x=29 y=16 fill=#f5f9f2 /><rect x=30 y=16 fill=#eff5f0 /><rect x=31 y=16 fill=#e5eeef /><rect x=32 y=16 fill=#d9e7ee /><rect x=33 y=16 fill=#d0e1ee /><rect x=34 y=16 fill=#caddee /><rect x=35 y=16 fill=#c2d7ed /><rect x=36 y=16 fill=#b5cde9 /><rect x=37 y=16 fill=#a7c3e4 /><rect x=38 y=16 fill=#9cbbe0 /><rect x=39 y=16 fill=#95b6dc /><rect x=40 y=16 fill=#91b4d9 /><rect x=41 y=16 fill=#8eb2d6 /><rect x=42 y=16 fill=#88afd2 /><rect x=43 y=16 fill=#80a9cc /><rect x=44 y=16 fill=#739fc4 /><rect x=45 y=16 fill=#6191b9 /><rect x=46 y=16 fill=#4b80ac /><rect x=47 y=16 fill=#366e9f /><rect x=48 y=16 fill=#2d6598 /><rect x=49 y=16 fill=#2d6598 /><rect x=-2 y=17 fill=#357893 /><rect x=-1 y=17 fill=#357893 /><rect x=0 y=17 fill=#397c96 /><rect x=1 y=17 fill=#41849d /><rect x=2 y=17 fill=#478aa2 /><rect x=3 y=17 fill=#4e90a7 /><rect x=4 y=17 fill=#5595ab /><rect x=5 y=17 fill=#5b9aaf /><rect x=6 y=17 fill=#629eb3 /><rect x=7 y=17 fill=#69a3b6 /><rect x=8 y=17 fill=#70a5b9 /><rect x=9 y=17 fill=#73a5b9 /><rect x=10 y=17 fill=#72a1b8 /><rect x=11 y=17 fill=#6d9bb7 /><rect x=12 y=17 fill=#6694b5 /><rect x=13 y=17 fill=#6390b4 /><rect x=14 y=17 fill=#6c94b6 /><rect x=15 y=17 fill=#789ab8 /><rect x=16 y=17 fill=#819fba /><rect x=17 y=17 fill=#819db9 /><rect x=18 y=17 fill=#7694b7 /><rect x=19 y=17 fill=#6c8db5 /><rect x=20 y=17 fill=#6d8eb7 /><rect x=21 y=17 fill=#7c9cc0 /><rect x=22 y=17 fill=#98b3cd /><rect x=23 y=17 fill=#c3d4dd /><rect x=24 y=17 fill=#e5eee9 /><rect x=25 y=17 fill=#f6faf0 /><rect x=26 y=17 fill=#fcfef4 /><rect x=27 y=17 fill=#fcfef6 /><rect x=28 y=17 fill=#fafdf5 /><rect x=29 y=17 fill=#f6fbf3 /><rect x=30 y=17 fill=#eff6f1 /><rect x=31 y=17 fill=#e4efef /><rect x=32 y=17 fill=#d7e5ee /><rect x=33 y=17 fill=#cddfee /><rect x=34 y=17 fill=#c7dbef /><rect x=35 y=17 fill=#bfd5ee /><rect x=36 y=17 fill=#b0cae9 /><rect x=37 y=17 fill=#a2bfe4 /><rect x=38 y=17 fill=#96b7df /><rect x=39 y=17 fill=#91b3dc /><rect x=40 y=17 fill=#8fb2d9 /><rect x=41 y=17 fill=#8db2d6 /><rect x=42 y=17 fill=#88afd2 /><rect x=43 y=17 fill=#81aacd /><rect x=44 y=17 fill=#74a1c5 /><rect x=45 y=17 fill=#6192ba /><rect x=46 y=17 fill=#4b80ad /><rect x=47 y=17 fill=#366fa0 /><rect x=48 y=17 fill=#2d6699 /><rect x=49 y=17 fill=#2d6699 /><rect x=-2 y=18 fill=#347791 /><rect x=-1 y=18 fill=#347791 /><rect x=0 y=18 fill=#397b95 /><rect x=1 y=18 fill=#41829c /><rect x=2 y=18 fill=#498aa2 /><rect x=3 y=18 fill=#5190a7 /><rect x=4 y=18 fill=#5996ac /><rect x=5 y=18 fill=#629bb1 /><rect x=6 y=18 fill=#6ba0b5 /><rect x=7 y=18 fill=#72a4b9 /><rect x=8 y=18 fill=#79a7bb /><rect x=9 y=18 fill=#7ba8bc /><rect x=10 y=18 fill=#7aa4ba /><rect x=11 y=18 fill=#739db8 /><rect x=12 y=18 fill=#6b95b5 /><rect x=13 y=18 fill=#6992b4 /><rect x=14 y=18 fill=#7095b5 /><rect x=15 y=18 fill=#7a9bb8 /><rect x=16 y=18 fill=#819fbb /><rect x=17 y=18 fill=#7f9dba /><rect x=18 y=18 fill=#7596b8 /><rect x=19 y=18 fill=#6b8fb7 /><rect x=20 y=18 fill=#6b91ba /><rect x=21 y=18 fill=#7a9ec2 /><rect x=22 y=18 fill=#98b6cf /><rect x=23 y=18 fill=#bfd4dd /><rect x=24 y=18 fill=#e3eeea /><rect x=25 y=18 fill=#f6fbf1 /><rect x=26 y=18 fill=#fbfef4 /><rect x=27 y=18 fill=#fbfef6 /><rect x=28 y=18 fill=#f8fdf5 /><rect x=29 y=18 fill=#f3faf3 /><rect x=30 y=18 fill=#ebf5f0 /><rect x=31 y=18 fill=#dfedee /><rect x=32 y=18 fill=#d1e3ed /><rect x=33 y=18 fill=#c6dced /><rect x=34 y=18 fill=#bed6ed /><rect x=35 y=18 fill=#b4ceeb /><rect x=36 y=18 fill=#a7c4e7 /><rect x=37 y=18 fill=#99b9e2 /><rect x=38 y=18 fill=#8fb1de /><rect x=39 y=18 fill=#8aadda /><rect x=40 y=18 fill=#89add7 /><rect x=41 y=18 fill=#88aed4 /><rect x=42 y=18 fill=#84acd1 /><rect x=43 y=18 fill=#7ca7cb /><rect x=44 y=18 fill=#6f9dc3 /><rect x=45 y=18 fill=#5d8db7 /><rect x=46 y=18 fill=#487caa /><rect x=47 y=18 fill=#346b9d /><rect x=48 y=18 fill=#2a6397 /><rect x=49 y=18 fill=#2a6397 /><rect x=-2 y=19 fill=#34748f /><rect x=-1 y=19 fill=#34748f /><rect x=0 y=19 fill=#397893 /><rect x=1 y=19 fill=#42809a /><rect x=2 y=19 fill=#4c88a1 /><rect x=3 y=19 fill=#558fa7 /><rect x=4 y=19 fill=#5f96ad /><rect x=5 y=19 fill=#6a9cb2 /><rect x=6 y=19 fill=#75a2b7 /><rect x=7 y=19 fill=#7da7bb /><rect x=8 y=19 fill=#83abbe /><rect x=9 y=19 fill=#87acbf /><rect x=10 y=19 fill=#85a9be /><rect x=11 y=19 fill=#7da1ba /><rect x=12 y=19 fill=#7599b6 /><rect x=13 y=19 fill=#7295b4 /><rect x=14 y=19 fill=#7697b6 /><rect x=15 y=19 fill=#7d9cb9 /><rect x=16 y=19 fill=#819fbb /><rect x=17 y=19 fill=#7d9ebc /><rect x=18 y=19 fill=#7399ba /><rect x=19 y=19 fill=#6994b9 /><rect x=20 y=19 fill=#6895bc /><rect x=21 y=19 fill=#76a1c3 /><rect x=22 y=19 fill=#92b7cf /><rect x=23 y=19 fill=#b7d1db /><rect x=24 y=19 fill=#dae9e7 /><rect x=25 y=19 fill=#eff7ee /><rect x=26 y=19 fill=#f6fcf3 /><rect x=27 y=19 fill=#f6fcf4 /><rect x=28 y=19 fill=#f3fbf4 /><rect x=29 y=19 fill=#edf9f2 /><rect x=30 y=19 fill=#e4f4ef /><rect x=31 y=19 fill=#d8ebed /><rect x=32 y=19 fill=#cae0ec /><rect x=33 y=19 fill=#bdd6eb /><rect x=34 y=19 fill=#b3cfea /><rect x=35 y=19 fill=#a7c6e8 /><rect x=36 y=19 fill=#9bbbe4 /><rect x=37 y=19 fill=#8eb0df /><rect x=38 y=19 fill=#85a9db /><rect x=39 y=19 fill=#81a6d7 /><rect x=40 y=19 fill=#81a7d4 /><rect x=41 y=19 fill=#80a8d0 /><rect x=42 y=19 fill=#7ca6cd /><rect x=43 y=19 fill=#75a0c7 /><rect x=44 y=19 fill=#6896be /><rect x=45 y=19 fill=#5685b1 /><rect x=46 y=19 fill=#4274a3 /><rect x=47 y=19 fill=#2f6498 /><rect x=48 y=19 fill=#275d92 /><rect x=49 y=19 fill=#275d92 /><rect x=-2 y=20 fill=#34708b /><rect x=-1 y=20 fill=#34708b /><rect x=0 y=20 fill=#39748f /><rect x=1 y=20 fill=#437d97 /><rect x=2 y=20 fill=#4d859e /><rect x=3 y=20 fill=#588da5 /><rect x=4 y=20 fill=#6494ac /><rect x=5 y=20 fill=#6f9bb2 /><rect x=6 y=20 fill=#7ba2b8 /><rect x=7 y=20 fill=#84a9bd /><rect x=8 y=20 fill=#8caec0 /><rect x=9 y=20 fill=#90b0c2 /><rect x=10 y=20 fill=#8eaec1 /><rect x=11 y=20 fill=#87a6bc /><rect x=12 y=20 fill=#7f9eb7 /><rect x=13 y=20 fill=#7b99b4 /><rect x=14 y=20 fill=#7c9ab6 /><rect x=15 y=20 fill=#7f9db9 /><rect x=16 y=20 fill=#81a1bc /><rect x=17 y=20 fill=#7ba0bd /><rect x=18 y=20 fill=#709cbb /><rect x=19 y=20 fill=#6698ba /><rect x=20 y=20 fill=#659abc /><rect x=21 y=20 fill=#71a4c2 /><rect x=22 y=20 fill=#8bb7cc /><rect x=23 y=20 fill=#aeced8 /><rect x=24 y=20 fill=#cfe3e2 /><rect x=25 y=20 fill=#e5f1ea /><rect x=26 y=20 fill=#eef7ef /><rect x=27 y=20 fill=#eff9f1 /><rect x=28 y=20 fill=#ecf8f1 /><rect x=29 y=20 fill=#e7f6f0 /><rect x=30 y=20 fill=#ddf1ed /><rect x=31 y=20 fill=#d0e7eb /><rect x=32 y=20 fill=#c0dbe9 /><rect x=33 y=20 fill=#b2d0e7 /><rect x=34 y=20 fill=#a7c8e6 /><rect x=35 y=20 fill=#9bbee3 /><rect x=36 y=20 fill=#8fb3e0 /><rect x=37 y=20 fill=#83a8db /><rect x=38 y=20 fill=#7aa0d7 /><rect x=39 y=20 fill=#789fd4 /><rect x=40 y=20 fill=#78a0d0 /><rect x=41 y=20 fill=#77a0cc /><rect x=42 y=20 fill=#749ec8 /><rect x=43 y=20 fill=#6c97c1 /><rect x=44 y=20 fill=#5f8bb6 /><rect x=45 y=20 fill=#4e7ba7 /><rect x=46 y=20 fill=#3c6b9b /><rect x=47 y=20 fill=#2c5e91 /><rect x=48 y=20 fill=#24588c /><rect x=49 y=20 fill=#24588c /><rect x=-2 y=21 fill=#316a86 /><rect x=-1 y=21 fill=#316a86 /><rect x=0 y=21 fill=#366e8a /><rect x=1 y=21 fill=#417791 /><rect x=2 y=21 fill=#4c809a /><rect x=3 y=21 fill=#5888a2 /><rect x=4 y=21 fill=#6491a9 /><rect x=5 y=21 fill=#7199b0 /><rect x=6 y=21 fill=#7da1b6 /><rect x=7 y=21 fill=#87a8bc /><rect x=8 y=21 fill=#8faec0 /><rect x=9 y=21 fill=#93b1c2 /><rect x=10 y=21 fill=#92afc1 /><rect x=11 y=21 fill=#8ea8bc /><rect x=12 y=21 fill=#87a1b8 /><rect x=13 y=21 fill=#829db6 /><rect x=14 y=21 fill=#819cb6 /><rect x=15 y=21 fill=#809eb8 /><rect x=16 y=21 fill=#7da1ba /><rect x=17 y=21 fill=#76a0bb /><rect x=18 y=21 fill=#6c9eba /><rect x=19 y=21 fill=#639cb9 /><rect x=20 y=21 fill=#619fbb /><rect x=21 y=21 fill=#6da8c0 /><rect x=22 y=21 fill=#84b8c9 /><rect x=23 y=21 fill=#a4cbd4 /><rect x=24 y=21 fill=#c4dede /><rect x=25 y=21 fill=#daebe6 /><rect x=26 y=21 fill=#e4f2eb /><rect x=27 y=21 fill=#e6f5ee /><rect x=28 y=21 fill=#e3f5ee /><rect x=29 y=21 fill=#def2ec /><rect x=30 y=21 fill=#d5edea /><rect x=31 y=21 fill=#c7e3e7 /><rect x=32 y=21 fill=#b6d6e4 /><rect x=33 y=21 fill=#a8cae2 /><rect x=34 y=21 fill=#9cc1e0 /><rect x=35 y=21 fill=#91b7de /><rect x=36 y=21 fill=#85adda /><rect x=37 y=21 fill=#7ba3d7 /><rect x=38 y=21 fill=#739cd3 /><rect x=39 y=21 fill=#719ad0 /><rect x=40 y=21 fill=#709acc /><rect x=41 y=21 fill=#6f99c8 /><rect x=42 y=21 fill=#6b96c3 /><rect x=43 y=21 fill=#638ebb /><rect x=44 y=21 fill=#5681ae /><rect x=45 y=21 fill=#46719f /><rect x=46 y=21 fill=#376493 /><rect x=47 y=21 fill=#29598b /><rect x=48 y=21 fill=#225487 /><rect x=49 y=21 fill=#225487 /><rect x=-2 y=22 fill=#2c627f /><rect x=-1 y=22 fill=#2c627f /><rect x=0 y=22 fill=#316682 /><rect x=1 y=22 fill=#3c6f8b /><rect x=2 y=22 fill=#487893 /><rect x=3 y=22 fill=#54819c /><rect x=4 y=22 fill=#618ba4 /><rect x=5 y=22 fill=#6e94ac /><rect x=6 y=22 fill=#7b9cb3 /><rect x=7 y=22 fill=#86a5b9 /><rect x=8 y=22 fill=#8fabbd /><rect x=9 y=22 fill=#95afc0 /><rect x=10 y=22 fill=#95aebf /><rect x=11 y=22 fill=#91a9bb /><rect x=12 y=22 fill=#8ca3b7 /><rect x=13 y=22 fill=#879fb6 /><rect x=14 y=22 fill=#829eb5 /><rect x=15 y=22 fill=#7e9eb6 /><rect x=16 y=22 fill=#789fb7 /><rect x=17 y=22 fill=#6fa0b8 /><rect x=18 y=22 fill=#669fb7 /><rect x=19 y=22 fill=#5fa0b8 /><rect x=20 y=22 fill=#5fa3ba /><rect x=21 y=22 fill=#6aacbf /><rect x=22 y=22 fill=#7fb9c7 /><rect x=23 y=22 fill=#9ccad0 /><rect x=24 y=22 fill=#bbdadb /><rect x=25 y=22 fill=#d0e6e2 /><rect x=26 y=22 fill=#d9ece7 /><rect x=27 y=22 fill=#daefe8 /><rect x=28 y=22 fill=#d8efe8 /><rect x=29 y=22 fill=#d3ece7 /><rect x=30 y=22 fill=#cae7e5 /><rect x=31 y=22 fill=#bddde2 /><rect x=32 y=22 fill=#acd0df /><rect x=33 y=22 fill=#9dc4dc /><rect x=34 y=22 fill=#91bad9 /><rect x=35 y=22 fill=#87b1d7 /><rect x=36 y=22 fill=#7ca7d4 /><rect x=37 y=22 fill=#749ed1 /><rect x=38 y=22 fill=#6e98ce /><rect x=39 y=22 fill=#6b96ca /><rect x=40 y=22 fill=#6a95c6 /><rect x=41 y=22 fill=#6893c2 /><rect x=42 y=22 fill=#638ebc /><rect x=43 y=22 fill=#5b86b4 /><rect x=44 y=22 fill=#507aa8 /><rect x=45 y=22 fill=#426d9a /><rect x=46 y=22 fill=#356190 /><rect x=47 y=22 fill=#285788 /><rect x=48 y=22 fill=#215283 /><rect x=49 y=22 fill=#215283 /><rect x=-2 y=23 fill=#255977 /><rect x=-1 y=23 fill=#255977 /><rect x=0 y=23 fill=#2a5d7a /><rect x=1 y=23 fill=#356682 /><rect x=2 y=23 fill=#416f8b /><rect x=3 y=23 fill=#4d7994 /><rect x=4 y=23 fill=#59839d /><rect x=5 y=23 fill=#668ca5 /><rect x=6 y=23 fill=#7396ad /><rect x=7 y=23 fill=#809eb3 /><rect x=8 y=23 fill=#8ba6b8 /><rect x=9 y=23 fill=#93aabb /><rect x=10 y=23 fill=#95aaba /><rect x=11 y=23 fill=#91a6b7 /><rect x=12 y=23 fill=#8ca1b4 /><rect x=13 y=23 fill=#869eb3 /><rect x=14 y=23 fill=#809db3 /><rect x=15 y=23 fill=#799db3 /><rect x=16 y=23 fill=#729eb3 /><rect x=17 y=23 fill=#699eb4 /><rect x=18 y=23 fill=#619fb4 /><rect x=19 y=23 fill=#5ca2b5 /><rect x=20 y=23 fill=#5ea8b9 /><rect x=21 y=23 fill=#69b0be /><rect x=22 y=23 fill=#7dbcc5 /><rect x=23 y=23 fill=#98c9ce /><rect x=24 y=23 fill=#b6d7d8 /><rect x=25 y=23 fill=#c7e1de /><rect x=26 y=23 fill=#cde5e1 /><rect x=27 y=23 fill=#cde7e2 /><rect x=28 y=23 fill=#cae7e1 /><rect x=29 y=23 fill=#c5e5e0 /><rect x=30 y=23 fill=#bddfde /><rect x=31 y=23 fill=#b0d7dc /><rect x=32 y=23 fill=#a2cbd9 /><rect x=33 y=23 fill=#94bfd6 /><rect x=34 y=23 fill=#88b4d2 /><rect x=35 y=23 fill=#7daace /><rect x=36 y=23 fill=#74a1cb /><rect x=37 y=23 fill=#6d9ac8 /><rect x=38 y=23 fill=#6895c6 /><rect x=39 y=23 fill=#6692c3 /><rect x=40 y=23 fill=#6490bf /><rect x=41 y=23 fill=#618dbb /><rect x=42 y=23 fill=#5c87b4 /><rect x=43 y=23 fill=#547fac /><rect x=44 y=23 fill=#4a74a1 /><rect x=45 y=23 fill=#3e6995 /><rect x=46 y=23 fill=#325e8c /><rect x=47 y=23 fill=#265483 /><rect x=48 y=23 fill=#1f4f7e /><rect x=49 y=23 fill=#1f4f7e /><rect x=-2 y=24 fill=#1d506f /><rect x=-1 y=24 fill=#1d506f /><rect x=0 y=24 fill=#225472 /><rect x=1 y=24 fill=#2d5c7a /><rect x=2 y=24 fill=#386683 /><rect x=3 y=24 fill=#44708c /><rect x=4 y=24 fill=#4f7a95 /><rect x=5 y=24 fill=#5c839d /><rect x=6 y=24 fill=#688da5 /><rect x=7 y=24 fill=#7596ac /><rect x=8 y=24 fill=#829db1 /><rect x=9 y=24 fill=#8ba2b4 /><rect x=10 y=24 fill=#8ea2b3 /><rect x=11 y=24 fill=#8b9fb1 /><rect x=12 y=24 fill=#879caf /><rect x=13 y=24 fill=#819aaf /><rect x=14 y=24 fill=#7b99ae /><rect x=15 y=24 fill=#7399af /><rect x=16 y=24 fill=#6b9baf /><rect x=17 y=24 fill=#639caf /><rect x=18 y=24 fill=#5c9eb0 /><rect x=19 y=24 fill=#58a1b2 /><rect x=20 y=24 fill=#5da8b6 /><rect x=21 y=24 fill=#69b2bc /><rect x=22 y=24 fill=#7dbcc3 /><rect x=23 y=24 fill=#95c8cc /><rect x=24 y=24 fill=#add3d3 /><rect x=25 y=24 fill=#bbdad8 /><rect x=26 y=24 fill=#bfddda /><rect x=27 y=24 fill=#bddeda /><rect x=28 y=24 fill=#baddda /><rect x=29 y=24 fill=#b6dcd9 /><rect x=30 y=24 fill=#afd7d7 /><rect x=31 y=24 fill=#a5d0d6 /><rect x=32 y=24 fill=#99c7d3 /><rect x=33 y=24 fill=#8cbbd0 /><rect x=34 y=24 fill=#80afca /><rect x=35 y=24 fill=#75a4c5 /><rect x=36 y=24 fill=#6c9bc2 /><rect x=37 y=24 fill=#6695bf /><rect x=38 y=24 fill=#6291bc /><rect x=39 y=24 fill=#608eba /><rect x=40 y=24 fill=#5e8bb7 /><rect x=41 y=24 fill=#5b88b3 /><rect x=42 y=24 fill=#5481ac /><rect x=43 y=24 fill=#4c78a3 /><rect x=44 y=24 fill=#436e99 /><rect x=45 y=24 fill=#38648f /><rect x=46 y=24 fill=#2d5a85 /><rect x=47 y=24 fill=#21507c /><rect x=48 y=24 fill=#1b4b77 /><rect x=49 y=24 fill=#1b4b77 /><rect x=-2 y=25 fill=#164867 /><rect x=-1 y=25 fill=#164867 /><rect x=0 y=25 fill=#1a4b6a /><rect x=1 y=25 fill=#245472 /><rect x=2 y=25 fill=#2f5d7b /><rect x=3 y=25 fill=#3a6784 /><rect x=4 y=25 fill=#45718d /><rect x=5 y=25 fill=#507a95 /><rect x=6 y=25 fill=#5b839c /><rect x=7 y=25 fill=#698ca3 /><rect x=8 y=25 fill=#7694a8 /><rect x=9 y=25 fill=#8199ac /><rect x=10 y=25 fill=#859aac /><rect x=11 y=25 fill=#8499ab /><rect x=12 y=25 fill=#7f96aa /><rect x=13 y=25 fill=#7994a9 /><rect x=14 y=25 fill=#7293a9 /><rect x=15 y=25 fill=#6c95a9 /><rect x=16 y=25 fill=#6597aa /><rect x=17 y=25 fill=#5d99aa /><rect x=18 y=25 fill=#569aaa /><rect x=19 y=25 fill=#539dac /><rect x=20 y=25 fill=#58a4b0 /><rect x=21 y=25 fill=#67aeb7 /><rect x=22 y=25 fill=#7bb9bf /><rect x=23 y=25 fill=#90c4c7 /><rect x=24 y=25 fill=#a3cccd /><rect x=25 y=25 fill=#add1d0 /><rect x=26 y=25 fill=#afd4d2 /><rect x=27 y=25 fill=#add4d2 /><rect x=28 y=25 fill=#aad3d2 /><rect x=29 y=25 fill=#a7d2d1 /><rect x=30 y=25 fill=#a2cfd0 /><rect x=31 y=25 fill=#9bc9d0 /><rect x=32 y=25 fill=#91c1ce /><rect x=33 y=25 fill=#86b6ca /><rect x=34 y=25 fill=#79a9c3 /><rect x=35 y=25 fill=#6d9dbd /><rect x=36 y=25 fill=#6595b9 /><rect x=37 y=25 fill=#608fb6 /><rect x=38 y=25 fill=#5c8bb3 /><rect x=39 y=25 fill=#5988b1 /><rect x=40 y=25 fill=#5785ae /><rect x=41 y=25 fill=#5381a9 /><rect x=42 y=25 fill=#4c7aa2 /><rect x=43 y=25 fill=#43719a /><rect x=44 y=25 fill=#396790 /><rect x=45 y=25 fill=#305d86 /><rect x=46 y=25 fill=#26537d /><rect x=47 y=25 fill=#1b4a73 /><rect x=48 y=25 fill=#15456e /><rect x=49 y=25 fill=#15456e /><rect x=-2 y=26 fill=#0f4362 /><rect x=-1 y=26 fill=#0f4362 /><rect x=0 y=26 fill=#134665 /><rect x=1 y=26 fill=#1d4d6c /><rect x=2 y=26 fill=#275674 /><rect x=3 y=26 fill=#315f7d /><rect x=4 y=26 fill=#3b6885 /><rect x=5 y=26 fill=#45718d /><rect x=6 y=26 fill=#507994 /><rect x=7 y=26 fill=#5d829a /><rect x=8 y=26 fill=#6b8aa0 /><rect x=9 y=26 fill=#768fa3 /><rect x=10 y=26 fill=#7c92a4 /><rect x=11 y=26 fill=#7b91a4 /><rect x=12 y=26 fill=#778fa3 /><rect x=13 y=26 fill=#708da2 /><rect x=14 y=26 fill=#6a8da3 /><rect x=15 y=26 fill=#6490a3 /><rect x=16 y=26 fill=#5f93a4 /><rect x=17 y=26 fill=#5894a4 /><rect x=18 y=26 fill=#5195a5 /><rect x=19 y=26 fill=#4e97a6 /><rect x=20 y=26 fill=#549daa /><rect x=21 y=26 fill=#63a8b1 /><rect x=22 y=26 fill=#77b3b9 /><rect x=23 y=26 fill=#8abdc0 /><rect x=24 y=26 fill=#98c4c5 /><rect x=25 y=26 fill=#9fc8c8 /><rect x=26 y=26 fill=#a0cac9 /><rect x=27 y=26 fill=#9ecaca /><rect x=28 y=26 fill=#9ccaca /><rect x=29 y=26 fill=#99c9ca /><rect x=30 y=26 fill=#95c6ca /><rect x=31 y=26 fill=#90c2c9 /><rect x=32 y=26 fill=#8abbc8 /><rect x=33 y=26 fill=#7fb0c3 /><rect x=34 y=26 fill=#72a3bc /><rect x=35 y=26 fill=#6797b5 /><rect x=36 y=26 fill=#5f8fb1 /><rect x=37 y=26 fill=#5a8aad /><rect x=38 y=26 fill=#5686ab /><rect x=39 y=26 fill=#5282a8 /><rect x=40 y=26 fill=#4e7ea4 /><rect x=41 y=26 fill=#49789f /><rect x=42 y=26 fill=#427198 /><rect x=43 y=26 fill=#396890 /><rect x=44 y=26 fill=#2f5f87 /><rect x=45 y=26 fill=#27567d /><rect x=46 y=26 fill=#1d4c73 /><rect x=47 y=26 fill=#144269 /><rect x=48 y=26 fill=#0e3e65 /><rect x=49 y=26 fill=#0e3e65 /><rect x=-2 y=27 fill=#0d4261 /><rect x=-1 y=27 fill=#0d4261 /><rect x=0 y=27 fill=#114464 /><rect x=1 y=27 fill=#194b6a /><rect x=2 y=27 fill=#235372 /><rect x=3 y=27 fill=#2d5c7a /><rect x=4 y=27 fill=#366481 /><rect x=5 y=27 fill=#406d89 /><rect x=6 y=27 fill=#4b7590 /><rect x=7 y=27 fill=#587e96 /><rect x=8 y=27 fill=#66859b /><rect x=9 y=27 fill=#718b9f /><rect x=10 y=27 fill=#778da0 /><rect x=11 y=27 fill=#768da0 /><rect x=12 y=27 fill=#728ca0 /><rect x=13 y=27 fill=#6c8a9f /><rect x=14 y=27 fill=#668ba0 /><rect x=15 y=27 fill=#618da0 /><rect x=16 y=27 fill=#5b90a1 /><rect x=17 y=27 fill=#5592a2 /><rect x=18 y=27 fill=#5093a2 /><rect x=19 y=27 fill=#4d95a3 /><rect x=20 y=27 fill=#539ba7 /><rect x=21 y=27 fill=#62a5ae /><rect x=22 y=27 fill=#74b0b6 /><rect x=23 y=27 fill=#86b9bd /><rect x=24 y=27 fill=#92c0c1 /><rect x=25 y=27 fill=#98c3c4 /><rect x=26 y=27 fill=#99c5c5 /><rect x=27 y=27 fill=#97c5c6 /><rect x=28 y=27 fill=#95c5c6 /><rect x=29 y=27 fill=#93c4c6 /><rect x=30 y=27 fill=#90c2c6 /><rect x=31 y=27 fill=#8bbdc6 /><rect x=32 y=27 fill=#85b7c4 /><rect x=33 y=27 fill=#7cadc0 /><rect x=34 y=27 fill=#6fa0b9 /><rect x=35 y=27 fill=#6495b2 /><rect x=36 y=27 fill=#5c8dad /><rect x=37 y=27 fill=#5787aa /><rect x=38 y=27 fill=#5383a6 /><rect x=39 y=27 fill=#4e7fa3 /><rect x=40 y=27 fill=#4a7a9f /><rect x=41 y=27 fill=#44749a /><rect x=42 y=27 fill=#3d6d93 /><rect x=43 y=27 fill=#34648b /><rect x=44 y=27 fill=#2b5b82 /><rect x=45 y=27 fill=#225278 /><rect x=46 y=27 fill=#19496e /><rect x=47 y=27 fill=#103f65 /><rect x=48 y=27 fill=#0b3a60 /><rect x=49 y=27 fill=#0b3a60 /><rect x=-2 y=28 fill=#0d4261 /><rect x=-1 y=28 fill=#0d4261 /><rect x=0 y=28 fill=#114464 /><rect x=1 y=28 fill=#194b6a /><rect x=2 y=28 fill=#235372 /><rect x=3 y=28 fill=#2d5c7a /><rect x=4 y=28 fill=#366481 /><rect x=5 y=28 fill=#406d89 /><rect x=6 y=28 fill=#4b7590 /><rect x=7 y=28 fill=#587e96 /><rect x=8 y=28 fill=#66859b /><rect x=9 y=28 fill=#718b9f /><rect x=10 y=28 fill=#778da0 /><rect x=11 y=28 fill=#768da0 /><rect x=12 y=28 fill=#728ca0 /><rect x=13 y=28 fill=#6c8a9f /><rect x=14 y=28 fill=#668ba0 /><rect x=15 y=28 fill=#618da0 /><rect x=16 y=28 fill=#5b90a1 /><rect x=17 y=28 fill=#5592a2 /><rect x=18 y=28 fill=#5093a2 /><rect x=19 y=28 fill=#4d95a3 /><rect x=20 y=28 fill=#539ba7 /><rect x=21 y=28 fill=#62a5ae /><rect x=22 y=28 fill=#74b0b6 /><rect x=23 y=28 fill=#86b9bd /><rect x=24 y=28 fill=#92c0c1 /><rect x=25 y=28 fill=#98c3c4 /><rect x=26 y=28 fill=#99c5c5 /><rect x=27 y=28 fill=#97c5c6 /><rect x=28 y=28 fill=#95c5c6 /><rect x=29 y=28 fill=#93c4c6 /><rect x=30 y=28 fill=#90c2c6 /><rect x=31 y=28 fill=#8bbdc6 /><rect x=32 y=28 fill=#85b7c4 /><rect x=33 y=28 fill=#7cadc0 /><rect x=34 y=28 fill=#6fa0b9 /><rect x=35 y=28 fill=#6495b2 /><rect x=36 y=28 fill=#5c8dad /><rect x=37 y=28 fill=#5787aa /><rect x=38 y=28 fill=#5383a6 /><rect x=39 y=28 fill=#4e7fa3 /><rect x=40 y=28 fill=#4a7a9f /><rect x=41 y=28 fill=#44749a /><rect x=42 y=28 fill=#3d6d93 /><rect x=43 y=28 fill=#34648b /><rect x=44 y=28 fill=#2b5b82 /><rect x=45 y=28 fill=#225278 /><rect x=46 y=28 fill=#19496e /><rect x=47 y=28 fill=#103f65 /><rect x=48 y=28 fill=#0b3a60 /><rect x=49 y=28 fill=#0b3a60 /></g></svg>
<svg class="abs" style="left:0;top:0" width="1920" height="1080" viewBox="0 0 1920 1080">
<defs><filter id="sb" x="-20%" y="-50%" width="140%" height="200%"><feGaussianBlur stdDeviation="5"/></filter></defs>
<path d="M1690 812L1920 868V905L1650 862z" fill="#1a4a80" opacity=".16" filter="url(#sb)"/>
<path d="M1690 950L1920 1040V1070L1660 950z" fill="#1a4a80" opacity=".12" filter="url(#sb)"/>
<path d="M1628.500 806.800H1686" stroke="#c3d4ea" stroke-width="1.800" fill="none" opacity=".8"/>
<path d="M1682 806L1686.800 806.500L1647.500 899.500L1643 897.500z" fill="#bccfe8" opacity=".8"/>
<text transform="scale(0.8 1)" x="1982.0 2015.5 2047.5 2078.6 2113.1 2147.0" y="941.500" font-family="Liberation Sans,sans-serif" font-weight="bold" font-size="22" fill="#b4cae4" opacity=".8">CENTOS</text>
</svg>
<div class="win" style="left:430px;width:734px;z-index:2">
<div class="title">npg@carme-gsi:~/Programs/CARME_Sort/build</div><svg class="abs" style="left:643px;top:14px" width="10" height="10" viewBox="0 0 10 10"><path d="M1.500 8h7" stroke="#7f8384" stroke-width="1.800"/></svg><svg class="abs" style="left:676.5px;top:13.500px" width="10" height="10" viewBox="0 0 10 10"><rect x="2" y="2" width="6" height="6" stroke="#7f8384" stroke-width="1.600" fill="none"/></svg><svg class="abs" style="left:710.5px;top:13.500px" width="10" height="10" viewBox="0 0 10 10"><path d="M1.800 1.800l6.400 6.400M8.200 1.800L1.800 8.200" stroke="#7f8384" stroke-width="1.600"/></svg><div class="menu"><span style="left:8px">File</span><span style="left:47px">Edit</span><span style="left:87px">View</span><span style="left:134.5px">Search</span><span style="left:194px">Terminal</span><span style="left:265px">Help</span></div>
<pre class="term">/TapeData/G22-88/R3_21
Opening dataspy 0
dataSpy Shared buffer area 0 (/SHM_110205) located at 0x9ea59000
dataSpy Current age 968224 index 32
Dataspy open
Info in &lt;THttpEngine::Create&gt;: Starting HTTP server on port 8085
^C
[npg@carme-gsi build]$ ./AIDASort -c ../ExampleConfig.csv -o test.root -s
Run time options:
-c
Configuration file: ../ExampleConfig.csv
-o
User output file: test.root
-s
Data spy option enabled
Adding files to be sorted:
/TapeData/G22-88/R3_20
/TapeData/G22-88/R3_21
Opening dataspy 0
dataSpy Shared buffer area 0 (/SHM_110205) located at 0x1db8b000
dataSpy Current age 1003401 index 9
Dataspy open
Info in &lt;THttpEngine::Create&gt;: Starting HTTP server on port 8085
</pre>
<div class="abs" style="left:1px;top:479.500px;width:9.500px;height:18.500px;border:1px solid #222"></div>
<div class="abs" style="left:722px;top:65px;width:12px;height:434px;background:#dcdcdb;border-left:1px solid #c8c8c6"></div>
<div class="abs" style="left:726px;top:456px;width:5px;height:40px;border-radius:3px;background:#b4b5b4"></div>
</div>
<div class="win" style="left:1164px;width:734px">
<div class="title" style="letter-spacing:-.17px">npg@carme-gsi:~</div><svg class="abs" style="left:643px;top:14px" width="10" height="10" viewBox="0 0 10 10"><path d="M1.500 8h7" stroke="#7f8384" stroke-width="1.800"/></svg><svg class="abs" style="left:676.5px;top:13.500px" width="10" height="10" viewBox="0 0 10 10"><rect x="2" y="2" width="6" height="6" stroke="#7f8384" stroke-width="1.600" fill="none"/></svg><svg class="abs" style="left:710.5px;top:13.500px" width="10" height="10" viewBox="0 0 10 10"><path d="M1.800 1.800l6.400 6.400M8.200 1.800L1.800 8.200" stroke="#7f8384" stroke-width="1.600"/></svg><div class="menu"><span style="left:8px">File</span><span style="left:47px">Edit</span><span style="left:87px">View</span><span style="left:134.5px">Search</span><span style="left:194px">Terminal</span><span style="left:265px">Help</span></div>
<pre class="term">Every 2.0s: cat rates.txt                               Fri Feb  9 13:17:10 2024

0       0
0       0
0       0
0       0
0       0
0       0
0       0
0       0
0       0
0       0
0       0
0       0
0       0
0       0
0       0
0       0
0       0
0       0
0       0
0       0
0       0
0       0</pre>
<div class="abs" style="left:711.500px;top:479.500px;width:9.500px;height:18.500px;border:1px solid #222"></div>
<div class="abs" style="left:722px;top:65px;width:12px;height:434px;background:#f2f2f1;border-left:1px solid #dadad8"></div>
<div class="abs" style="left:726px;top:69px;width:5px;height:427px;border-radius:3px;background:#c6c7c6"></div>
</div>
</div>
</body></html>
